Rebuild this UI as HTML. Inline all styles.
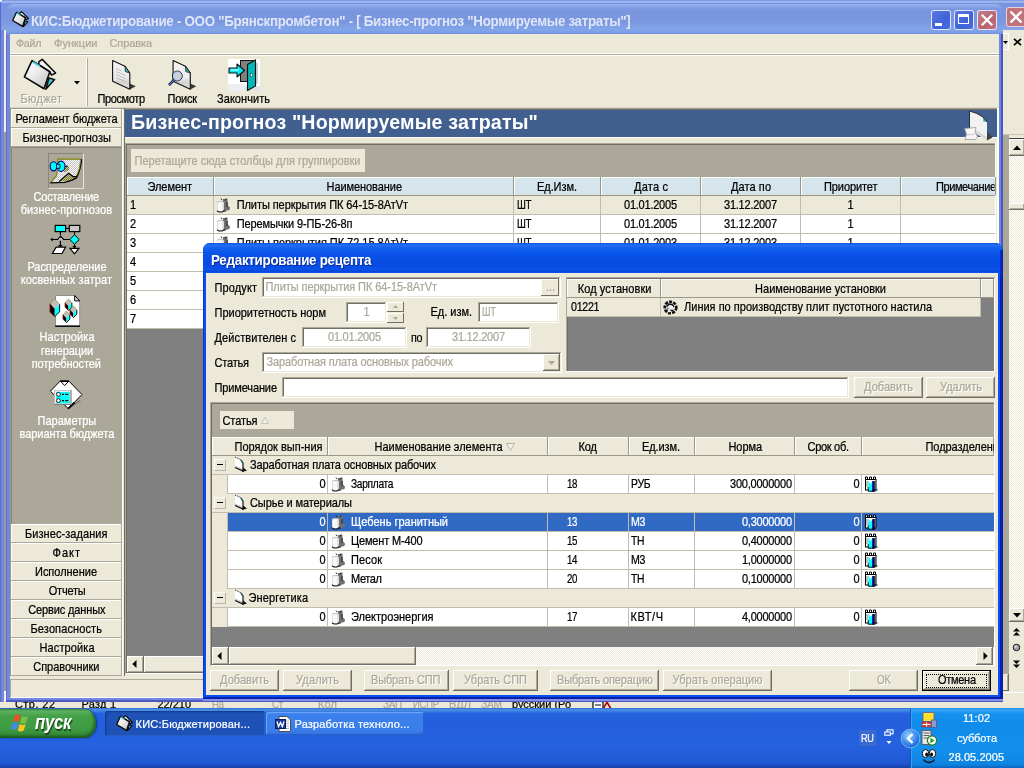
<!DOCTYPE html>
<html lang="ru"><head><meta charset="utf-8"><title>КИС:Бюджетирование</title>
<style>
html,body{margin:0;padding:0}
body{width:1024px;height:768px;overflow:hidden;position:relative;background:#ECE9D8;font-family:"Liberation Sans",sans-serif;font-size:11px}
div,span.t,svg{position:absolute}
span.t{white-space:nowrap;-webkit-text-stroke:0.22px currentColor}
#scr{left:0;top:0;width:1024px;height:768px;overflow:hidden;will-change:transform}
.dith{background-image:repeating-conic-gradient(#fff 0% 25%, #ECE9D8 0% 50%);background-size:2px 2px}
</style></head><body><div id="scr">
<div style="left:0px;top:0px;width:1024px;height:30px;background:linear-gradient(#6b88e0 0,#9db6ec 4%,#9db6ec 8%,#7592e2 11%,#7a96df 30%,#7a96df 60%,#86a4ea 100%);"></div>
<div style="left:0px;top:30px;width:4px;height:680px;background:#7088e0;"></div>
<div style="left:0px;top:0px;width:1px;height:710px;background:#5b6ad0;"></div>
<div style="left:4px;top:30px;width:2px;height:102px;background:#f6f0d8;"></div>
<div style="left:4px;top:132px;width:2px;height:559px;background:#a09c8c;"></div>
<div style="left:4px;top:691px;width:2px;height:2px;background:#fff;"></div>
<div style="left:4px;top:693px;width:2px;height:17px;background:#f6f0d8;"></div>
<div style="left:1003px;top:30px;width:21px;height:678px;background:#ECE9D8;"></div>
<div style="left:1006px;top:7px;width:21px;height:20px;background:#c0737b;border-radius:3px;box-shadow:inset 0 0 0 1px #e8d0d8"></div>
<svg style="left:1009px;top:10px" width="14" height="14" viewBox="0 0 14 14"><path d="M1.5 1.5L12.5 12.5M12.5 1.5L1.5 12.5" stroke="#fff" stroke-width="2.4" fill="none"/></svg>
<div style="left:1003px;top:33px;width:6px;height:17px;border:1px solid #fff;border-left:none;box-sizing:border-box"></div>
<svg style="left:1003px;top:41px" width="5" height="3" viewBox="0 0 5 3"><path d="M0 0L5 0L2.5 3Z" fill="#000"/></svg>
<svg style="left:1013px;top:38px" width="9" height="8" viewBox="0 0 9 8"><path d="M1 0.8L8 7.2M8 0.8L1 7.2" stroke="#000" stroke-width="1.7" fill="none"/></svg>
<div style="left:1003px;top:134px;width:21px;height:1px;background:#c8c5b6;"></div>
<div style="left:1003px;top:135px;width:6px;height:539px;background:#ACA899;"></div>
<div class="dith" style="left:1009px;top:139px;width:15px;height:482px"></div>
<div style="left:1009px;top:138px;width:15px;height:1px;background:#404040;"></div>
<div style="left:1009px;top:139px;width:16px;height:17px;background:#ECE9D8;"></div>
<div style="left:1009px;top:139px;width:15px;height:1px;background:#fff;"></div>
<div style="left:1009px;top:139px;width:1px;height:16px;background:#fff;"></div>
<div style="left:1009px;top:155px;width:16px;height:1px;background:#716F64;"></div>
<div style="left:1024px;top:139px;width:1px;height:17px;background:#716F64;"></div>
<div style="left:1010px;top:154px;width:14px;height:1px;background:#ACA899;"></div>
<div style="left:1023px;top:140px;width:1px;height:15px;background:#ACA899;"></div>
<svg style="left:1013px;top:145px" width="8" height="5" viewBox="0 0 8 5"><path d="M0 5L4 0.5L8 5Z" fill="#000"/></svg>
<div style="left:1009px;top:203px;width:16px;height:7px;background:#ECE9D8;"></div>
<div style="left:1009px;top:203px;width:15px;height:1px;background:#fff;"></div>
<div style="left:1009px;top:203px;width:1px;height:6px;background:#fff;"></div>
<div style="left:1009px;top:209px;width:16px;height:1px;background:#716F64;"></div>
<div style="left:1024px;top:203px;width:1px;height:7px;background:#716F64;"></div>
<div style="left:1010px;top:208px;width:14px;height:1px;background:#ACA899;"></div>
<div style="left:1023px;top:204px;width:1px;height:5px;background:#ACA899;"></div>
<div style="left:1009px;top:608px;width:16px;height:14px;background:#ECE9D8;"></div>
<div style="left:1009px;top:608px;width:15px;height:1px;background:#fff;"></div>
<div style="left:1009px;top:608px;width:1px;height:13px;background:#fff;"></div>
<div style="left:1009px;top:621px;width:16px;height:1px;background:#716F64;"></div>
<div style="left:1024px;top:608px;width:1px;height:14px;background:#716F64;"></div>
<div style="left:1010px;top:620px;width:14px;height:1px;background:#ACA899;"></div>
<div style="left:1023px;top:609px;width:1px;height:12px;background:#ACA899;"></div>
<svg style="left:1013px;top:613px" width="8" height="5" viewBox="0 0 8 5"><path d="M0 0L8 0L4 4.5Z" fill="#000"/></svg>
<svg style="left:1013px;top:628px" width="7" height="8" viewBox="0 0 7 8"><path d="M0 3.5L3.5 0L7 3.5Z M0 7.5L3.5 4L7 7.5Z" fill="#000"/></svg>
<svg style="left:1012px;top:643px" width="9" height="9" viewBox="0 0 9 9"><circle cx="4.5" cy="4.5" r="3.3" fill="#a0a0a0" stroke="#202020" stroke-width="1"/><circle cx="3.6" cy="3.6" r="1.2" fill="#e0e0e0"/></svg>
<svg style="left:1013px;top:660px" width="7" height="8" viewBox="0 0 7 8"><path d="M0 0.5L3.5 4L7 0.5Z M0 4.5L3.5 8L7 4.5Z" fill="#000"/></svg>
<div style="left:1003px;top:674px;width:6px;height:17px;background:#ECE9D8;"></div>
<div style="left:1008px;top:674px;width:1px;height:17px;background:#716F64;"></div>
<div style="left:1007px;top:675px;width:1px;height:15px;background:#ACA899;"></div>
<div style="left:1003px;top:690px;width:6px;height:1px;background:#716F64;"></div>
<div style="left:1003px;top:692px;width:21px;height:1px;background:#fff;"></div>
<div style="left:0px;top:702px;width:1024px;height:6px;background:#ECE9D8;"></div>
<span class="t" style="left:15.00px;top:699.29px;font-size:11px;line-height:11px;color:#000;letter-spacing:0.426px;">Стр. 22</span>
<span class="t" style="left:81.50px;top:699.29px;font-size:11px;line-height:11px;color:#000;letter-spacing:0.228px;">Разд 1</span>
<span class="t" style="left:157.50px;top:699.29px;font-size:11px;line-height:11px;color:#000;letter-spacing:-0.028px;">22/210</span>
<span class="t" style="left:212.00px;top:699.29px;font-size:11px;line-height:11px;color:#ACA899;letter-spacing:-0.300px;transform:scale(0.872,1);transform-origin:0 9.31px;">На</span>
<span class="t" style="left:272.00px;top:699.29px;font-size:11px;line-height:11px;color:#ACA899;letter-spacing:-0.300px;transform:scale(0.867,1);transform-origin:0 9.31px;">Ст</span>
<span class="t" style="left:318.00px;top:699.29px;font-size:11px;line-height:11px;color:#ACA899;letter-spacing:0.150px;">Кол</span>
<span class="t" style="left:383.00px;top:699.29px;font-size:11px;line-height:11px;color:#ACA899;letter-spacing:-0.300px;transform:scale(0.898,1);transform-origin:0 9.31px;">ЗАП</span>
<span class="t" style="left:413.00px;top:699.29px;font-size:11px;line-height:11px;color:#ACA899;letter-spacing:-0.300px;transform:scale(0.861,1);transform-origin:0 9.31px;">ИСПР</span>
<span class="t" style="left:449.00px;top:699.29px;font-size:11px;line-height:11px;color:#ACA899;letter-spacing:0.119px;">ВДЛ</span>
<span class="t" style="left:481.00px;top:699.29px;font-size:11px;line-height:11px;color:#ACA899;letter-spacing:-0.300px;transform:scale(0.931,1);transform-origin:0 9.31px;">ЗАМ</span>
<span class="t" style="left:512.00px;top:699.29px;font-size:11px;line-height:11px;color:#000;letter-spacing:-0.016px;">русский (Ро</span>
<svg style="left:592px;top:700px" width="20" height="10" viewBox="0 0 20 10"><rect x="1" y="1.5" width="10" height="8" fill="#fff" stroke="#000" stroke-width="1.2"/><path d="M3 5L9 5" stroke="#000" stroke-width="1"/><path d="M11 9L15 2L19 9" stroke="#b00000" stroke-width="1.6" fill="none"/></svg>
<div style="left:6px;top:4px;width:997px;height:698px;background:#7088e0;border-radius:7px 7px 0 0"></div>
<div style="left:6px;top:30px;width:1px;height:672px;background:#6470d8;"></div>
<div style="left:1001px;top:30px;width:2px;height:672px;background:#4e56c4;"></div>
<div style="left:6px;top:700px;width:997px;height:2px;background:#4e56c4;"></div>
<div style="left:6px;top:4px;width:997px;height:30px;background:linear-gradient(#9ab4ec 0,#92acea 5%,#7e9ae1 15%,#7a96df 22%,#7a96df 58%,#82a6ea 86%,#7e9fe7 93%,#6f8fe0 100%);border-radius:7px 7px 0 0"></div>
<div style="left:10px;top:34px;width:989px;height:664px;background:#ECE9D8;"></div>
<svg style="left:11.5px;top:11px" width="17" height="16.5" viewBox="0 0 34 33"><path d="M16 7L15.8 3.8L19.2 1.4L32.6 15L28.5 17.2L26.8 13.7Z" fill="#f0f0f0" stroke="#0a0a0a" stroke-width="2.4" stroke-linejoin="round"/>
<path d="M26 20L31.6 21.6L22.8 31.2Z" fill="#40d0d8" stroke="#0a0a0a" stroke-width="2.2" stroke-linejoin="round"/>
<path d="M9 2.6L26.8 13.7L21 30.8L1.4 18.9Z" fill="url(#fg)" stroke="#0a0a0a" stroke-width="2.6" stroke-linejoin="round"/>
<path d="M9.6 4.4L16.6 8.6" stroke="#40d0d8" stroke-width="3"/></svg>
<span class="t" style="left:31.00px;top:14.15px;font-size:14px;line-height:14px;color:#dfe6f8;letter-spacing:-0.300px;font-weight:bold;-webkit-text-stroke:0;transform:scale(0.952,1);transform-origin:0 11.85px;">КИС:Бюджетирование - ООО "Брянскпромбетон" - [ Бизнес-прогноз "Нормируемые затраты"]</span>
<div style="left:931px;top:10px;width:20px;height:20px;background:linear-gradient(135deg,#5a7ae4,#3f62d8 60%,#4a70e2);border-radius:3px;box-shadow:inset 0 0 0 1px #dfe6fb"></div>
<div style="left:935px;top:23px;width:7px;height:3px;background:#fff;"></div>
<div style="left:954px;top:10px;width:20px;height:20px;background:linear-gradient(135deg,#5a7ae4,#3f62d8 60%,#4a70e2);border-radius:3px;box-shadow:inset 0 0 0 1px #dfe6fb"></div>
<div style="left:958px;top:14px;width:11px;height:10px;border:1.5px solid #fff;border-top-width:3px;box-sizing:border-box"></div>
<div style="left:977px;top:10px;width:20px;height:20px;background:linear-gradient(135deg,#c8808c,#b9646f 60%,#c27480);border-radius:3px;box-shadow:inset 0 0 0 1px #dfe6fb"></div>
<svg style="left:980px;top:13px" width="14" height="14" viewBox="0 0 14 14"><path d="M1.8 1.8L12.2 12.2M12.2 1.8L1.8 12.2" stroke="#fff" stroke-width="2.3" fill="none"/></svg>
<span class="t" style="left:15.50px;top:38.19px;font-size:11px;line-height:11px;color:#ACA899;letter-spacing:-0.300px;transform:scale(0.975,1);transform-origin:0 9.31px;">Файл</span>
<span class="t" style="left:54.00px;top:38.19px;font-size:11px;line-height:11px;color:#ACA899;letter-spacing:0.027px;">Функции</span>
<span class="t" style="left:109.50px;top:38.19px;font-size:11px;line-height:11px;color:#ACA899;letter-spacing:-0.108px;">Справка</span>
<div style="left:10px;top:53px;width:989px;height:1px;background:#fff;"></div>
<div style="left:10px;top:54px;width:989px;height:1px;background:#ACA899;"></div>
<div style="left:10px;top:55px;width:989px;height:1px;background:#fff;"></div>
<div style="left:10px;top:107px;width:989px;height:1px;background:#d8d5c5;"></div>
<div style="left:10px;top:108px;width:989px;height:1px;background:#9d9a8b;"></div>
<div style="left:86px;top:58px;width:1px;height:48px;background:#fff;"></div>
<div style="left:87px;top:58px;width:1px;height:48px;background:#ACA899;"></div>
<span class="t" style="left:21.50px;top:94.69px;font-size:11px;line-height:11px;color:#fff;letter-spacing:0.342px;transform:scale(1.000,1.125);transform-origin:0 9.31px;">Бюджет</span>
<span class="t" style="left:20.50px;top:93.69px;font-size:11px;line-height:11px;color:#ACA899;letter-spacing:0.342px;transform:scale(1.000,1.125);transform-origin:0 9.31px;">Бюджет</span>
<span class="t" style="left:97.50px;top:93.69px;font-size:11px;line-height:11px;color:#000;letter-spacing:-0.390px;transform:scale(1.000,1.125);transform-origin:0 9.31px;">Просмотр</span>
<span class="t" style="left:167.50px;top:93.69px;font-size:11px;line-height:11px;color:#000;letter-spacing:-0.245px;transform:scale(1.000,1.125);transform-origin:0 9.31px;">Поиск</span>
<span class="t" style="left:217.00px;top:93.69px;font-size:11px;line-height:11px;color:#000;letter-spacing:0.059px;transform:scale(1.000,1.125);transform-origin:0 9.31px;">Закончить</span>
<svg style="left:74px;top:81px" width="6" height="4" viewBox="0 0 6 4"><path d="M0 0L6 0L3 3.5Z" fill="#000"/></svg>
<svg style="left:23px;top:58px" width="34" height="33" viewBox="0 0 34 33"><defs><linearGradient id="fg" x1="0" y1="0" x2="1" y2="1"><stop offset="0" stop-color="#ffffff"/><stop offset="0.45" stop-color="#ececec"/><stop offset="1" stop-color="#bcbcbc"/></linearGradient></defs>
<path d="M16 7L15.8 3.8L19.2 1.4L32.6 15L28.5 17.2L26.8 13.7Z" fill="#f0f0f0" stroke="#0a0a0a" stroke-width="1.5" stroke-linejoin="round"/>
<path d="M26 20L31.6 21.6L22.8 31.2Z" fill="#40d0d8" stroke="#0a0a0a" stroke-width="1.5" stroke-linejoin="round"/>
<path d="M9 2.6L26.8 13.7L21 30.8L1.4 18.9Z" fill="url(#fg)" stroke="#0a0a0a" stroke-width="1.6" stroke-linejoin="round"/>
<path d="M9.6 4L16.6 8" stroke="#40d0d8" stroke-width="2"/></svg>
<svg style="left:112px;top:60px" width="25" height="31" viewBox="0 0 25 31"><defs><linearGradient id="pg" x1="0" y1="0" x2="0" y2="1"><stop offset="0" stop-color="#f4f4f4"/><stop offset="0.6" stop-color="#ececec"/><stop offset="0.75" stop-color="#d4d4d4"/><stop offset="1" stop-color="#dcdcdc"/></linearGradient></defs>
<path d="M17.8 23.6L23.8 26.3L17.8 29.4Z" fill="#383838"/>
<path d="M0.6 0.6L13 6.2L17.8 13L17.8 29.2L0.6 21.3Z" fill="url(#pg)" stroke="#111" stroke-width="1.1" stroke-linejoin="round"/>
<path d="M13 6.2L13.3 11.6L17.8 13Z" fill="#3cb0b0" stroke="#111" stroke-width="0.7"/>
<path d="M4 8.5L10 11M4 11.5L13.5 15.6M4 14.5L13.5 18.6M4 17.5L13.5 21.6" stroke="#b8b8b8" stroke-width="0.9"/></svg>
<svg style="left:168px;top:60px" width="30" height="31" viewBox="0 0 30 31"><path d="M22.3 23.6L28.3 26.3L22.3 29.4Z" fill="#383838"/>
<path d="M5.1 0.6L17.5 6.2L22.3 13L22.3 29.2L5.1 21.3Z" fill="url(#pg)" stroke="#111" stroke-width="1.1" stroke-linejoin="round"/>
<path d="M17.5 6.2L17.8 11.6L22.3 13Z" fill="#3cb0b0" stroke="#111" stroke-width="0.7"/>
<path d="M6 19.8L1 25.2" stroke="#111" stroke-width="2.6"/><path d="M6 19.8L1.2 25" stroke="#4070e8" stroke-width="1.2"/>
<circle cx="9.3" cy="16" r="4.9" fill="#d0d0d0" stroke="#111" stroke-width="1"/><circle cx="9.3" cy="16" r="3.9" fill="none" stroke="#a8c8ff" stroke-width="1.1"/></svg>
<svg style="left:228px;top:59px" width="32" height="32" viewBox="0 0 32 32"><rect width="32" height="32" fill="#fff"/>
<path d="M0 27L32 27L32 32L0 32Z" fill="#e4e4e4"/><path d="M0 25L18 25L16 32L0 32Z" fill="#ededed"/>
<rect x="12.5" y="1.5" width="15" height="21" fill="#808080" stroke="#111" stroke-width="1"/>
<path d="M28 4L30 4L30 24L27 26Z" fill="#d0d0d0"/>
<path d="M19.5 5.5L27.5 1L27.5 27L19.5 31.5Z" fill="#00b8b8" stroke="#111" stroke-width="1.1"/>
<rect x="22.6" y="14.5" width="1.8" height="3" fill="#fff" stroke="#333" stroke-width="0.5"/>
<path d="M1 9L9 9L9 5L16.5 11.5L9 18L9 14L1 14Z" fill="#00e8f0" stroke="#111" stroke-width="1.1" stroke-linejoin="round"/>
<path d="M3 11L11 11" stroke="#fff" stroke-width="1"/></svg>
<div style="left:10px;top:108px;width:1px;height:568px;background:#9d9a8b;"></div>
<div style="left:11px;top:109px;width:111px;height:567px;background:#ACA899;"></div>
<div style="left:0px;top:0px;width:2px;height:1px;background:#fff;"></div>
<div style="left:0px;top:1px;width:1px;height:1px;background:#fff;"></div>
<div style="left:11px;top:109px;width:111px;height:19px;background:#ECE9D8;"></div>
<div style="left:11px;top:109px;width:110px;height:1px;background:#fff;"></div>
<div style="left:11px;top:109px;width:1px;height:18px;background:#fff;"></div>
<div style="left:11px;top:127px;width:111px;height:1px;background:#ACA899;"></div>
<div style="left:121px;top:109px;width:1px;height:19px;background:#ACA899;"></div>
<span class="t" style="left:15.50px;top:113.69px;font-size:11px;line-height:11px;color:#000;letter-spacing:0.001px;transform:scale(1.000,1.125);transform-origin:0 9.31px;">Регламент бюджета</span>
<div style="left:11px;top:128px;width:111px;height:19px;background:#ECE9D8;"></div>
<div style="left:11px;top:128px;width:110px;height:1px;background:#fff;"></div>
<div style="left:11px;top:128px;width:1px;height:18px;background:#fff;"></div>
<div style="left:11px;top:146px;width:111px;height:1px;background:#ACA899;"></div>
<div style="left:121px;top:128px;width:1px;height:19px;background:#ACA899;"></div>
<span class="t" style="left:22.50px;top:132.69px;font-size:11px;line-height:11px;color:#000;letter-spacing:0.109px;transform:scale(1.000,1.125);transform-origin:0 9.31px;">Бизнес-прогнозы</span>
<div style="left:11px;top:147px;width:1px;height:377px;background:#8a877a;"></div>
<div style="left:11px;top:147px;width:111px;height:1px;background:#8a877a;"></div>
<div style="left:11px;top:524px;width:111px;height:19px;background:#ECE9D8;"></div>
<div style="left:11px;top:524px;width:110px;height:1px;background:#fff;"></div>
<div style="left:11px;top:524px;width:1px;height:18px;background:#fff;"></div>
<div style="left:11px;top:542px;width:111px;height:1px;background:#ACA899;"></div>
<div style="left:121px;top:524px;width:1px;height:19px;background:#ACA899;"></div>
<span class="t" style="left:25.00px;top:528.69px;font-size:11px;line-height:11px;color:#000;letter-spacing:0.067px;transform:scale(1.000,1.125);transform-origin:0 9.31px;">Бизнес-задания</span>
<div style="left:11px;top:543px;width:111px;height:19px;background:#ECE9D8;"></div>
<div style="left:11px;top:543px;width:110px;height:1px;background:#fff;"></div>
<div style="left:11px;top:543px;width:1px;height:18px;background:#fff;"></div>
<div style="left:11px;top:561px;width:111px;height:1px;background:#ACA899;"></div>
<div style="left:121px;top:543px;width:1px;height:19px;background:#ACA899;"></div>
<span class="t" style="left:52.50px;top:547.69px;font-size:11px;line-height:11px;color:#000;letter-spacing:1.015px;transform:scale(1.000,1.125);transform-origin:0 9.31px;">Факт</span>
<div style="left:11px;top:562px;width:111px;height:19px;background:#ECE9D8;"></div>
<div style="left:11px;top:562px;width:110px;height:1px;background:#fff;"></div>
<div style="left:11px;top:562px;width:1px;height:18px;background:#fff;"></div>
<div style="left:11px;top:580px;width:111px;height:1px;background:#ACA899;"></div>
<div style="left:121px;top:562px;width:1px;height:19px;background:#ACA899;"></div>
<span class="t" style="left:35.00px;top:566.69px;font-size:11px;line-height:11px;color:#000;letter-spacing:-0.020px;transform:scale(1.000,1.125);transform-origin:0 9.31px;">Исполнение</span>
<div style="left:11px;top:581px;width:111px;height:19px;background:#ECE9D8;"></div>
<div style="left:11px;top:581px;width:110px;height:1px;background:#fff;"></div>
<div style="left:11px;top:581px;width:1px;height:18px;background:#fff;"></div>
<div style="left:11px;top:599px;width:111px;height:1px;background:#ACA899;"></div>
<div style="left:121px;top:581px;width:1px;height:19px;background:#ACA899;"></div>
<span class="t" style="left:48.75px;top:585.69px;font-size:11px;line-height:11px;color:#000;letter-spacing:-0.204px;transform:scale(1.000,1.125);transform-origin:0 9.31px;">Отчеты</span>
<div style="left:11px;top:600px;width:111px;height:19px;background:#ECE9D8;"></div>
<div style="left:11px;top:600px;width:110px;height:1px;background:#fff;"></div>
<div style="left:11px;top:600px;width:1px;height:18px;background:#fff;"></div>
<div style="left:11px;top:618px;width:111px;height:1px;background:#ACA899;"></div>
<div style="left:121px;top:600px;width:1px;height:19px;background:#ACA899;"></div>
<span class="t" style="left:28.25px;top:604.69px;font-size:11px;line-height:11px;color:#000;letter-spacing:-0.130px;transform:scale(1.000,1.125);transform-origin:0 9.31px;">Сервис данных</span>
<div style="left:11px;top:619px;width:111px;height:19px;background:#ECE9D8;"></div>
<div style="left:11px;top:619px;width:110px;height:1px;background:#fff;"></div>
<div style="left:11px;top:619px;width:1px;height:18px;background:#fff;"></div>
<div style="left:11px;top:637px;width:111px;height:1px;background:#ACA899;"></div>
<div style="left:121px;top:619px;width:1px;height:19px;background:#ACA899;"></div>
<span class="t" style="left:30.50px;top:623.69px;font-size:11px;line-height:11px;color:#000;letter-spacing:0.122px;transform:scale(1.000,1.125);transform-origin:0 9.31px;">Безопасность</span>
<div style="left:11px;top:638px;width:111px;height:19px;background:#ECE9D8;"></div>
<div style="left:11px;top:638px;width:110px;height:1px;background:#fff;"></div>
<div style="left:11px;top:638px;width:1px;height:18px;background:#fff;"></div>
<div style="left:11px;top:656px;width:111px;height:1px;background:#ACA899;"></div>
<div style="left:121px;top:638px;width:1px;height:19px;background:#ACA899;"></div>
<span class="t" style="left:39.50px;top:642.69px;font-size:11px;line-height:11px;color:#000;letter-spacing:0.106px;transform:scale(1.000,1.125);transform-origin:0 9.31px;">Настройка</span>
<div style="left:11px;top:657px;width:111px;height:19px;background:#ECE9D8;"></div>
<div style="left:11px;top:657px;width:110px;height:1px;background:#fff;"></div>
<div style="left:11px;top:657px;width:1px;height:18px;background:#fff;"></div>
<div style="left:11px;top:675px;width:111px;height:1px;background:#ACA899;"></div>
<div style="left:121px;top:657px;width:1px;height:19px;background:#ACA899;"></div>
<span class="t" style="left:33.25px;top:661.69px;font-size:11px;line-height:11px;color:#000;letter-spacing:-0.039px;transform:scale(1.000,1.125);transform-origin:0 9.31px;">Справочники</span>
<span class="t" style="left:33.40px;top:192.39px;font-size:11px;line-height:11px;color:#fff;letter-spacing:-0.145px;transform:scale(1.000,1.125);transform-origin:0 9.31px;">Составление</span>
<span class="t" style="left:20.70px;top:205.19px;font-size:11px;line-height:11px;color:#fff;letter-spacing:0.087px;transform:scale(1.000,1.125);transform-origin:0 9.31px;">бизнес-прогнозов</span>
<span class="t" style="left:27.40px;top:262.19px;font-size:11px;line-height:11px;color:#fff;letter-spacing:-0.040px;transform:scale(1.000,1.125);transform-origin:0 9.31px;">Распределение</span>
<span class="t" style="left:20.70px;top:275.09px;font-size:11px;line-height:11px;color:#fff;letter-spacing:0.088px;transform:scale(1.000,1.125);transform-origin:0 9.31px;">косвенных затрат</span>
<span class="t" style="left:39.50px;top:332.44px;font-size:11px;line-height:11px;color:#fff;letter-spacing:0.106px;transform:scale(1.000,1.125);transform-origin:0 9.31px;">Настройка</span>
<span class="t" style="left:40.75px;top:345.69px;font-size:11px;line-height:11px;color:#fff;letter-spacing:-0.050px;transform:scale(1.000,1.125);transform-origin:0 9.31px;">генерации</span>
<span class="t" style="left:31.75px;top:358.69px;font-size:11px;line-height:11px;color:#fff;letter-spacing:-0.082px;transform:scale(1.000,1.125);transform-origin:0 9.31px;">потребностей</span>
<span class="t" style="left:37.50px;top:415.69px;font-size:11px;line-height:11px;color:#fff;letter-spacing:0.015px;transform:scale(1.000,1.125);transform-origin:0 9.31px;">Параметры</span>
<span class="t" style="left:19.50px;top:428.69px;font-size:11px;line-height:11px;color:#fff;letter-spacing:-0.033px;transform:scale(1.000,1.125);transform-origin:0 9.31px;">варианта бюджета</span>
<div style="left:48px;top:153px;width:36px;height:36px;box-sizing:border-box;border:1px solid;border-color:#8a877a #e8e6dc #e8e6dc #8a877a"></div>
<svg style="left:49px;top:154px" width="34" height="34" viewBox="0 0 34 34"><defs><pattern id="dt" width="2" height="2" patternUnits="userSpaceOnUse"><rect width="2" height="2" fill="#fff"/><rect width="1" height="1" fill="#c0c0c0"/><rect x="1" y="1" width="1" height="1" fill="#c0c0c0"/></pattern>
<pattern id="dt2" width="2" height="2" patternUnits="userSpaceOnUse"><rect width="2" height="2" fill="#c0c0c0"/><rect width="1" height="1" fill="#808000"/><rect x="1" y="1" width="1" height="1" fill="#808000"/></pattern></defs>
<path d="M9 5.2L32.5 5.2C32 12 30.5 18 27.4 23.8C24 26 20 27.6 15.6 28.4L1.3 28.9L7.6 21.5L8.2 16.9Z" fill="url(#dt)"/>
<path d="M11 27.4L19.6 19.6L24.2 23L27.8 23C25 26 20 27.6 11 27.4Z" fill="url(#dt2)"/>
<path d="M15.6 12.9L20 12.9L20 16L15 18.8Z" fill="url(#dt2)"/>
<path d="M1.3 28.9L7.6 21.5L8.4 16.5M9 9L9 5.2L32.5 5.2" fill="none" stroke="#808000" stroke-width="1.2"/>
<path d="M32.5 5.2C32 12 30.5 18 27.4 23.8C24 26 20 27.6 15.6 28.4L1.3 28.9" fill="none" stroke="#000" stroke-width="1.4"/>
<path d="M31.3 8C30.8 14 29.5 18.5 27 22.5" fill="none" stroke="#808000" stroke-width="1"/>
<path d="M10 27.6L19.6 19.2L24.2 22.6L27.6 22.6" fill="none" stroke="#000" stroke-width="1.2"/>
<ellipse cx="4.5" cy="12.3" rx="3.4" ry="4.6" fill="#00ffff" stroke="#000080" stroke-width="1.1"/>
<ellipse cx="12" cy="12.3" rx="4" ry="5.2" fill="#00ffff" stroke="#000080" stroke-width="1.1"/>
<path d="M8 10.3L11 10.3L11 14.3L8 14.3" fill="#00ffff" stroke="#000" stroke-width="0.9"/>
<path d="M16 12.3L19 12.3" stroke="#000" stroke-width="1.1"/></svg>
<svg style="left:50px;top:224px" width="31" height="31" viewBox="0 0 31 31"><path d="M15.6 4.4L19.3 4.4M10.4 7.7L10.4 11M2 15.5L7.8 15.5L10.6 12.2L13.6 15.5L19.8 15.5M10.4 16.4L10.4 23M8.6 21.6L12.2 21.6M24.5 7.7L24.5 10.8M24.5 20.2L24.5 24.2M22.8 22.7L26.2 22.7" stroke="#000" stroke-width="1.2" fill="none"/>
<circle cx="10.5" cy="15" r="1.6" fill="#c0c0c0"/>
<rect x="5.2" y="1.4" width="10.4" height="6.2" fill="#00ffff" stroke="#000" stroke-width="1.2"/>
<rect x="19.3" y="1.4" width="10.5" height="6.2" fill="#c8c8c8" stroke="#000" stroke-width="1.2"/>
<path d="M24.5 10.8L29.3 15.5L24.5 20.2L19.8 15.5Z" fill="#00ffff" stroke="#000" stroke-width="1"/>
<path d="M0.3 15.5L2.6 13.6L2.6 17.4Z" fill="#000"/>
<path d="M6.2 23.2L15.6 23.2L12 29.5L2.4 29.5Z" fill="#fff" stroke="#000" stroke-width="1.2"/>
<path d="M20 24.4L28.9 24.4L24.5 29.8Z" fill="#fff" stroke="#000" stroke-width="1.2"/></svg>
<svg style="left:49px;top:294px" width="33" height="34" viewBox="0 0 33 34"><path d="M6.5 1.5L25.7 1.5L30.7 6.9L30.7 32L6.5 32Z" fill="#fff" stroke="#909090" stroke-width="1"/><path d="M25.7 1.5L25.7 6.9L30.7 6.9Z" fill="#e0e0e0" stroke="#000" stroke-width="1"/><path d="M6.2 32.2L31 32.2" stroke="#000" stroke-width="1.4"/>
<path d="M5.7 5.1 L10.6 10.3 L5.7 15 L1 9.8 Z" fill="#c0c0c0"/><path d="M1 9.8 L5.7 15 L5.7 22.6 L1 18.1 Z" fill="#000"/><path d="M5.7 15 L10.6 10.3 L10.6 17.9 L5.7 22.6 Z" fill="#00ffff"/><path d="M1 9.8 L5.7 5.1 L10.6 10.3" fill="none" stroke="#808000" stroke-width="0.9" stroke-dasharray="1 0.6"/><path d="M1 9.8 L1 18.1 L5.7 22.6" fill="none" stroke="#900000" stroke-width="0.8"/><path d="M10.6 10.3 L10.6 17.9 L5.7 22.6" fill="none" stroke="#000" stroke-width="0.9"/><path d="M19.5 5.1 L22.9 8.8 L19.5 12.1 L16.1 8.8 Z" fill="#c0c0c0"/><path d="M16.1 8.8 L19.5 12.1 L19.5 16.6 L16.1 13.2 Z" fill="#000"/><path d="M19.5 12.1 L22.9 8.8 L22.9 13.2 L19.5 16.6 Z" fill="#00ffff"/><path d="M16.1 8.8 L19.5 5.1 L22.9 8.8" fill="none" stroke="#808000" stroke-width="0.9" stroke-dasharray="1 0.6"/><path d="M16.1 8.8 L16.1 13.2 L19.5 16.6" fill="none" stroke="#900000" stroke-width="0.8"/><path d="M22.9 8.8 L22.9 13.2 L19.5 16.6" fill="none" stroke="#000" stroke-width="0.9"/><path d="M24.4 12.1 L27.8 15.8 L24.4 19.2 L21 15.8 Z" fill="#c0c0c0"/><path d="M21 15.8 L24.4 19.2 L24.4 23.6 L21 20.2 Z" fill="#000"/><path d="M24.4 19.2 L27.8 15.8 L27.8 20.2 L24.4 23.6 Z" fill="#00ffff"/><path d="M21 15.8 L24.4 12.1 L27.8 15.8" fill="none" stroke="#808000" stroke-width="0.9" stroke-dasharray="1 0.6"/><path d="M21 15.8 L21 20.2 L24.4 23.6" fill="none" stroke="#900000" stroke-width="0.8"/><path d="M27.8 15.8 L27.8 20.2 L24.4 23.6" fill="none" stroke="#000" stroke-width="0.9"/><path d="M17.4 17.1 L20.8 20.7 L17.4 24.1 L14 20.7 Z" fill="#c0c0c0"/><path d="M14 20.7 L17.4 24.1 L17.4 28.6 L14 25.2 Z" fill="#000"/><path d="M17.4 24.1 L20.8 20.7 L20.8 25.2 L17.4 28.6 Z" fill="#00ffff"/><path d="M14 20.7 L17.4 17.1 L20.8 20.7" fill="none" stroke="#808000" stroke-width="0.9" stroke-dasharray="1 0.6"/><path d="M14 20.7 L14 25.2 L17.4 28.6" fill="none" stroke="#900000" stroke-width="0.8"/><path d="M20.8 20.7 L20.8 25.2 L17.4 28.6" fill="none" stroke="#000" stroke-width="0.9"/></svg>
<svg style="left:50px;top:380px" width="34" height="31" viewBox="0 0 34 31"><path d="M20 28.2L31 21.2L29.5 20L19 27Z" fill="#808080"/>
<path d="M0.4 11.2L10.1 1.2L19 1.2L32 14.6L18.2 28.6Z" fill="#fff" stroke="#000" stroke-width="1"/>
<path d="M10.1 1.2L19 1.2" stroke="#000" stroke-width="1.6"/><path d="M11.2 1.8L14.6 5.5L18.2 1.8" fill="none" stroke="#000" stroke-width="1"/>
<path d="M24.5 22.5L18.2 28.6" stroke="#000" stroke-width="1.8"/>
<rect x="4.2" y="10.1" width="17.4" height="14.9" fill="#808080"/><rect x="4.2" y="10.1" width="16.4" height="13.9" fill="#c8c8c8"/>
<rect x="6" y="11.7" width="13.5" height="11.5" fill="#00ffff"/><path d="M5.6 23.4L5.6 11.3L19.8 11.3" fill="none" stroke="#fff" stroke-width="0.8"/>
<circle cx="8.4" cy="14.3" r="1.9" fill="#fff" stroke="#400000" stroke-width="0.9"/><circle cx="8.4" cy="20.6" r="1.9" fill="#fff" stroke="#400000" stroke-width="0.9"/>
<path d="M12 14.3L14 14.3M15.2 14.3L18.2 14.3M12 20.6L14 20.6M15.2 20.6L18.2 20.6" stroke="#000" stroke-width="1.3"/></svg>
<div style="left:122px;top:109px;width:4px;height:567px;background:#ECE9D8;"></div>
<div style="left:122px;top:109px;width:1px;height:567px;background:#fff;"></div>
<div style="left:124px;top:109px;width:1px;height:567px;background:#ACA899;"></div>
<div style="left:125px;top:108px;width:872px;height:1px;background:#a29f90;"></div>
<div style="left:125px;top:109px;width:872px;height:1px;background:#716f64;"></div>
<div style="left:124px;top:108px;width:1px;height:568px;background:#716f64;"></div>
<div style="left:997px;top:108px;width:2px;height:590px;background:#fff;"></div>
<div style="left:125px;top:110px;width:872px;height:27px;background:#41608F;"></div>
<div style="left:125px;top:137px;width:872px;height:1px;background:#fff;"></div>
<span class="t" style="left:131.00px;top:113.21px;font-size:19.6px;line-height:19.6px;color:#fff;letter-spacing:0.165px;font-weight:bold;-webkit-text-stroke:0;">Бизнес-прогноз "Нормируемые затраты"</span>
<svg style="left:964px;top:110px" width="29" height="32" viewBox="0 0 29 32"><path d="M23 21.5L28.5 27.5L23 30.5Z" fill="#404040"/>
<path d="M5.5 1L13 3.5L19 7L23 12L23 30.5L5.5 19.5Z" fill="#f2f2f2"/><path d="M5.5 19.5L23 30.5L23 27L5.5 16Z" fill="#d8d8d8"/>
<path d="M19 7L19.3 11.6L23 12Z" fill="#40b8b8"/><path d="M5.5 19.5L5.5 1L13 3.5L19 7L23 12" fill="none" stroke="#202020" stroke-width="0.9"/>
<path d="M0.5 18.5L12 17.5L11 22L13.5 26.5L11.5 29.5L1 29.5L2.5 24Z" fill="#f6f6f6" stroke="#9a9a9a" stroke-width="0.8"/><path d="M3 25L11 24" stroke="#c8c8c8" stroke-width="1"/></svg>
<div style="left:126px;top:143px;width:870px;height:531px;background:#ACA899;"></div>
<div style="left:125px;top:143px;width:871px;height:1px;background:#ACA899;"></div>
<div style="left:125px;top:143px;width:1px;height:531px;background:#ACA899;"></div>
<div style="left:126px;top:144px;width:869px;height:1px;background:#716F64;"></div>
<div style="left:126px;top:144px;width:1px;height:529px;background:#716F64;"></div>
<div style="left:995px;top:143px;width:1px;height:531px;background:#fff;"></div>
<div style="left:126px;top:673px;width:870px;height:1px;background:#fff;"></div>
<div style="left:131px;top:149px;width:234px;height:23px;background:#ECE9D8;"></div>
<span class="t" style="left:134.50px;top:155.69px;font-size:11px;line-height:11px;color:#aca899;letter-spacing:-0.001px;transform:scale(1.000,1.125);transform-origin:0 9.31px;">Перетащите сюда столбцы для группировки</span>
<div style="left:127px;top:177px;width:868px;height:18px;background:#d6e4ec;"></div>
<div style="left:127px;top:177px;width:1px;height:18px;background:#fff;"></div>
<div style="left:127px;top:177px;width:86px;height:1px;background:#fff;"></div>
<div style="left:213px;top:177px;width:1px;height:18px;background:#9a9788;"></div>
<div style="left:214px;top:177px;width:1px;height:18px;background:#fff;"></div>
<div style="left:214px;top:177px;width:299px;height:1px;background:#fff;"></div>
<div style="left:513px;top:177px;width:1px;height:18px;background:#9a9788;"></div>
<div style="left:514px;top:177px;width:1px;height:18px;background:#fff;"></div>
<div style="left:514px;top:177px;width:86px;height:1px;background:#fff;"></div>
<div style="left:600px;top:177px;width:1px;height:18px;background:#9a9788;"></div>
<div style="left:601px;top:177px;width:1px;height:18px;background:#fff;"></div>
<div style="left:601px;top:177px;width:99px;height:1px;background:#fff;"></div>
<div style="left:700px;top:177px;width:1px;height:18px;background:#9a9788;"></div>
<div style="left:701px;top:177px;width:1px;height:18px;background:#fff;"></div>
<div style="left:701px;top:177px;width:99px;height:1px;background:#fff;"></div>
<div style="left:800px;top:177px;width:1px;height:18px;background:#9a9788;"></div>
<div style="left:801px;top:177px;width:1px;height:18px;background:#fff;"></div>
<div style="left:801px;top:177px;width:99px;height:1px;background:#fff;"></div>
<div style="left:900px;top:177px;width:1px;height:18px;background:#9a9788;"></div>
<div style="left:901px;top:177px;width:1px;height:18px;background:#fff;"></div>
<div style="left:901px;top:177px;width:94px;height:1px;background:#fff;"></div>
<div style="left:995px;top:177px;width:1px;height:18px;background:#9a9788;"></div>
<div style="left:127px;top:195px;width:868px;height:1px;background:#9a9788;"></div>
<span class="t" style="left:147.50px;top:181.69px;font-size:11px;line-height:11px;color:#000;letter-spacing:-0.061px;transform:scale(1.000,1.125);transform-origin:0 9.31px;">Элемент</span>
<span class="t" style="left:326.50px;top:181.69px;font-size:11px;line-height:11px;color:#000;letter-spacing:-0.068px;transform:scale(1.000,1.125);transform-origin:0 9.31px;">Наименование</span>
<span class="t" style="left:537.00px;top:181.69px;font-size:11px;line-height:11px;color:#000;letter-spacing:-0.063px;transform:scale(1.000,1.125);transform-origin:0 9.31px;">Ед.Изм.</span>
<span class="t" style="left:634.00px;top:181.69px;font-size:11px;line-height:11px;color:#000;letter-spacing:0.218px;transform:scale(1.000,1.125);transform-origin:0 9.31px;">Дата с</span>
<span class="t" style="left:731.00px;top:181.69px;font-size:11px;line-height:11px;color:#000;letter-spacing:0.086px;transform:scale(1.000,1.125);transform-origin:0 9.31px;">Дата по</span>
<span class="t" style="left:824.00px;top:181.69px;font-size:11px;line-height:11px;color:#000;letter-spacing:-0.094px;transform:scale(1.000,1.125);transform-origin:0 9.31px;">Приоритет</span>
<span class="t" style="left:936.00px;top:181.69px;font-size:11px;line-height:11px;color:#000;letter-spacing:-0.407px;transform:scale(1.000,1.125);transform-origin:0 9.31px;clip-path:inset(0 1px 0 0);">Примечание</span>
<div style="left:127px;top:196px;width:868px;height:18px;background:#ECE9D8;"></div>
<div style="left:127px;top:214px;width:868px;height:1px;background:#c0bdae;"></div>
<div style="left:213px;top:196px;width:1px;height:18px;background:#c0bdae;"></div>
<div style="left:513px;top:196px;width:1px;height:18px;background:#c0bdae;"></div>
<div style="left:600px;top:196px;width:1px;height:18px;background:#c0bdae;"></div>
<div style="left:700px;top:196px;width:1px;height:18px;background:#c0bdae;"></div>
<div style="left:800px;top:196px;width:1px;height:18px;background:#c0bdae;"></div>
<div style="left:900px;top:196px;width:1px;height:18px;background:#c0bdae;"></div>
<span class="t" style="left:130.00px;top:199.69px;font-size:11px;line-height:11px;color:#000;transform:scale(1.000,1.125);transform-origin:0 9.31px;">1</span>
<svg style="left:216px;top:198px" width="15" height="15" viewBox="0 0 15 15"><path d="M7 1L11.5 0.8L11.8 7.5L14 9.5L13.5 12L9 13L6 10Z" fill="#707070"/>
<path d="M9 2.5L10.2 0.5M6 2L5 0.6M11 4L11 9" stroke="#222" stroke-width="1"/>
<path d="M1 4.5C1 3 8 3 8 4.5L8 12.5C8 14.2 1 14.2 1 12.5Z" fill="#e0e0e0"/>
<path d="M3 4.5L3 13.5M5 4.5L5 13.6" stroke="#fff" stroke-width="1.6"/>
<path d="M1 4.5C1 3 8 3 8 4.5" fill="#f4f4f4" stroke="#b0b0b0" stroke-width="0.8"/>
<path d="M1.2 12.6C1.5 14.4 7.5 14.4 8 12.6L9.5 13.4" fill="none" stroke="#111" stroke-width="1.1"/></svg>
<span class="t" style="left:236.70px;top:199.69px;font-size:11px;line-height:11px;color:#000;letter-spacing:-0.075px;transform:scale(1.000,1.125);transform-origin:0 9.31px;">Плиты перкрытия ПК 64-15-8АтVт</span>
<span class="t" style="left:516.50px;top:199.69px;font-size:11px;line-height:11px;color:#000;letter-spacing:-0.300px;transform:scale(0.879,1.125);transform-origin:0 9.31px;">ШТ</span>
<span class="t" style="left:624.00px;top:199.69px;font-size:11px;line-height:11px;color:#000;letter-spacing:-0.228px;transform:scale(1.000,1.125);transform-origin:0 9.31px;">01.01.2005</span>
<span class="t" style="left:724.00px;top:199.69px;font-size:11px;line-height:11px;color:#000;letter-spacing:-0.228px;transform:scale(1.000,1.125);transform-origin:0 9.31px;">31.12.2007</span>
<span class="t" style="left:847.50px;top:199.69px;font-size:11px;line-height:11px;color:#000;transform:scale(1.000,1.125);transform-origin:0 9.31px;">1</span>
<div style="left:127px;top:215px;width:868px;height:18px;background:#fff;"></div>
<div style="left:127px;top:233px;width:868px;height:1px;background:#c0bdae;"></div>
<div style="left:213px;top:215px;width:1px;height:18px;background:#c0bdae;"></div>
<div style="left:513px;top:215px;width:1px;height:18px;background:#c0bdae;"></div>
<div style="left:600px;top:215px;width:1px;height:18px;background:#c0bdae;"></div>
<div style="left:700px;top:215px;width:1px;height:18px;background:#c0bdae;"></div>
<div style="left:800px;top:215px;width:1px;height:18px;background:#c0bdae;"></div>
<div style="left:900px;top:215px;width:1px;height:18px;background:#c0bdae;"></div>
<span class="t" style="left:130.00px;top:218.69px;font-size:11px;line-height:11px;color:#000;transform:scale(1.000,1.125);transform-origin:0 9.31px;">2</span>
<svg style="left:216px;top:217px" width="15" height="15" viewBox="0 0 15 15"><path d="M7 1L11.5 0.8L11.8 7.5L14 9.5L13.5 12L9 13L6 10Z" fill="#707070"/>
<path d="M9 2.5L10.2 0.5M6 2L5 0.6M11 4L11 9" stroke="#222" stroke-width="1"/>
<path d="M1 4.5C1 3 8 3 8 4.5L8 12.5C8 14.2 1 14.2 1 12.5Z" fill="#e0e0e0"/>
<path d="M3 4.5L3 13.5M5 4.5L5 13.6" stroke="#fff" stroke-width="1.6"/>
<path d="M1 4.5C1 3 8 3 8 4.5" fill="#f4f4f4" stroke="#b0b0b0" stroke-width="0.8"/>
<path d="M1.2 12.6C1.5 14.4 7.5 14.4 8 12.6L9.5 13.4" fill="none" stroke="#111" stroke-width="1.1"/></svg>
<span class="t" style="left:236.70px;top:218.69px;font-size:11px;line-height:11px;color:#000;letter-spacing:-0.116px;transform:scale(1.000,1.125);transform-origin:0 9.31px;">Перемычки 9-ПБ-26-8п</span>
<span class="t" style="left:516.50px;top:218.69px;font-size:11px;line-height:11px;color:#000;letter-spacing:-0.300px;transform:scale(0.879,1.125);transform-origin:0 9.31px;">ШТ</span>
<span class="t" style="left:624.00px;top:218.69px;font-size:11px;line-height:11px;color:#000;letter-spacing:-0.228px;transform:scale(1.000,1.125);transform-origin:0 9.31px;">01.01.2005</span>
<span class="t" style="left:724.00px;top:218.69px;font-size:11px;line-height:11px;color:#000;letter-spacing:-0.228px;transform:scale(1.000,1.125);transform-origin:0 9.31px;">31.12.2007</span>
<span class="t" style="left:847.50px;top:218.69px;font-size:11px;line-height:11px;color:#000;transform:scale(1.000,1.125);transform-origin:0 9.31px;">1</span>
<div style="left:127px;top:234px;width:868px;height:18px;background:#fff;"></div>
<div style="left:127px;top:252px;width:868px;height:1px;background:#c0bdae;"></div>
<div style="left:213px;top:234px;width:1px;height:18px;background:#c0bdae;"></div>
<div style="left:513px;top:234px;width:1px;height:18px;background:#c0bdae;"></div>
<div style="left:600px;top:234px;width:1px;height:18px;background:#c0bdae;"></div>
<div style="left:700px;top:234px;width:1px;height:18px;background:#c0bdae;"></div>
<div style="left:800px;top:234px;width:1px;height:18px;background:#c0bdae;"></div>
<div style="left:900px;top:234px;width:1px;height:18px;background:#c0bdae;"></div>
<span class="t" style="left:130.00px;top:237.69px;font-size:11px;line-height:11px;color:#000;transform:scale(1.000,1.125);transform-origin:0 9.31px;">3</span>
<svg style="left:216px;top:236px" width="15" height="15" viewBox="0 0 15 15"><path d="M7 1L11.5 0.8L11.8 7.5L14 9.5L13.5 12L9 13L6 10Z" fill="#707070"/>
<path d="M9 2.5L10.2 0.5M6 2L5 0.6M11 4L11 9" stroke="#222" stroke-width="1"/>
<path d="M1 4.5C1 3 8 3 8 4.5L8 12.5C8 14.2 1 14.2 1 12.5Z" fill="#e0e0e0"/>
<path d="M3 4.5L3 13.5M5 4.5L5 13.6" stroke="#fff" stroke-width="1.6"/>
<path d="M1 4.5C1 3 8 3 8 4.5" fill="#f4f4f4" stroke="#b0b0b0" stroke-width="0.8"/>
<path d="M1.2 12.6C1.5 14.4 7.5 14.4 8 12.6L9.5 13.4" fill="none" stroke="#111" stroke-width="1.1"/></svg>
<span class="t" style="left:236.70px;top:237.69px;font-size:11px;line-height:11px;color:#000;letter-spacing:-0.033px;transform:scale(1.000,1.125);transform-origin:0 9.31px;">Плиты перкрытия ПК 72.15.8АтVт</span>
<span class="t" style="left:516.50px;top:237.69px;font-size:11px;line-height:11px;color:#000;letter-spacing:-0.300px;transform:scale(0.879,1.125);transform-origin:0 9.31px;">ШТ</span>
<span class="t" style="left:624.00px;top:237.69px;font-size:11px;line-height:11px;color:#000;letter-spacing:-0.228px;transform:scale(1.000,1.125);transform-origin:0 9.31px;">01.01.2003</span>
<span class="t" style="left:724.00px;top:237.69px;font-size:11px;line-height:11px;color:#000;letter-spacing:-0.228px;transform:scale(1.000,1.125);transform-origin:0 9.31px;">31.12.2003</span>
<span class="t" style="left:847.50px;top:237.69px;font-size:11px;line-height:11px;color:#000;transform:scale(1.000,1.125);transform-origin:0 9.31px;">1</span>
<div style="left:127px;top:253px;width:868px;height:18px;background:#fff;"></div>
<div style="left:127px;top:271px;width:868px;height:1px;background:#c0bdae;"></div>
<div style="left:213px;top:253px;width:1px;height:18px;background:#c0bdae;"></div>
<div style="left:513px;top:253px;width:1px;height:18px;background:#c0bdae;"></div>
<div style="left:600px;top:253px;width:1px;height:18px;background:#c0bdae;"></div>
<div style="left:700px;top:253px;width:1px;height:18px;background:#c0bdae;"></div>
<div style="left:800px;top:253px;width:1px;height:18px;background:#c0bdae;"></div>
<div style="left:900px;top:253px;width:1px;height:18px;background:#c0bdae;"></div>
<span class="t" style="left:130.00px;top:256.69px;font-size:11px;line-height:11px;color:#000;transform:scale(1.000,1.125);transform-origin:0 9.31px;">4</span>
<div style="left:127px;top:272px;width:868px;height:18px;background:#fff;"></div>
<div style="left:127px;top:290px;width:868px;height:1px;background:#c0bdae;"></div>
<div style="left:213px;top:272px;width:1px;height:18px;background:#c0bdae;"></div>
<div style="left:513px;top:272px;width:1px;height:18px;background:#c0bdae;"></div>
<div style="left:600px;top:272px;width:1px;height:18px;background:#c0bdae;"></div>
<div style="left:700px;top:272px;width:1px;height:18px;background:#c0bdae;"></div>
<div style="left:800px;top:272px;width:1px;height:18px;background:#c0bdae;"></div>
<div style="left:900px;top:272px;width:1px;height:18px;background:#c0bdae;"></div>
<span class="t" style="left:130.00px;top:275.69px;font-size:11px;line-height:11px;color:#000;transform:scale(1.000,1.125);transform-origin:0 9.31px;">5</span>
<div style="left:127px;top:291px;width:868px;height:18px;background:#fff;"></div>
<div style="left:127px;top:309px;width:868px;height:1px;background:#c0bdae;"></div>
<div style="left:213px;top:291px;width:1px;height:18px;background:#c0bdae;"></div>
<div style="left:513px;top:291px;width:1px;height:18px;background:#c0bdae;"></div>
<div style="left:600px;top:291px;width:1px;height:18px;background:#c0bdae;"></div>
<div style="left:700px;top:291px;width:1px;height:18px;background:#c0bdae;"></div>
<div style="left:800px;top:291px;width:1px;height:18px;background:#c0bdae;"></div>
<div style="left:900px;top:291px;width:1px;height:18px;background:#c0bdae;"></div>
<span class="t" style="left:130.00px;top:294.69px;font-size:11px;line-height:11px;color:#000;transform:scale(1.000,1.125);transform-origin:0 9.31px;">6</span>
<div style="left:127px;top:310px;width:868px;height:18px;background:#fff;"></div>
<div style="left:127px;top:328px;width:868px;height:1px;background:#c0bdae;"></div>
<div style="left:213px;top:310px;width:1px;height:18px;background:#c0bdae;"></div>
<div style="left:513px;top:310px;width:1px;height:18px;background:#c0bdae;"></div>
<div style="left:600px;top:310px;width:1px;height:18px;background:#c0bdae;"></div>
<div style="left:700px;top:310px;width:1px;height:18px;background:#c0bdae;"></div>
<div style="left:800px;top:310px;width:1px;height:18px;background:#c0bdae;"></div>
<div style="left:900px;top:310px;width:1px;height:18px;background:#c0bdae;"></div>
<span class="t" style="left:130.00px;top:313.69px;font-size:11px;line-height:11px;color:#000;transform:scale(1.000,1.125);transform-origin:0 9.31px;">7</span>
<div style="left:127px;top:329px;width:868px;height:327px;background:#808080;"></div>
<div class="dith" style="left:127px;top:656px;width:868px;height:17px"></div>
<div style="left:127px;top:656px;width:17px;height:17px;background:#ECE9D8;"></div>
<div style="left:127px;top:656px;width:16px;height:1px;background:#fff;"></div>
<div style="left:127px;top:656px;width:1px;height:16px;background:#fff;"></div>
<div style="left:127px;top:672px;width:17px;height:1px;background:#716F64;"></div>
<div style="left:143px;top:656px;width:1px;height:17px;background:#716F64;"></div>
<div style="left:128px;top:671px;width:15px;height:1px;background:#ACA899;"></div>
<div style="left:142px;top:657px;width:1px;height:15px;background:#ACA899;"></div>
<div style="left:144px;top:656px;width:456px;height:17px;background:#ECE9D8;"></div>
<div style="left:144px;top:656px;width:455px;height:1px;background:#fff;"></div>
<div style="left:144px;top:656px;width:1px;height:16px;background:#fff;"></div>
<div style="left:144px;top:672px;width:456px;height:1px;background:#716F64;"></div>
<div style="left:599px;top:656px;width:1px;height:17px;background:#716F64;"></div>
<div style="left:145px;top:671px;width:454px;height:1px;background:#ACA899;"></div>
<div style="left:598px;top:657px;width:1px;height:15px;background:#ACA899;"></div>
<svg style="left:132px;top:660px" width="5" height="9" viewBox="0 0 5 9"><path d="M4.5 0L4.5 8L0.3 4Z" fill="#000"/></svg>
<div style="left:10px;top:679px;width:987px;height:19px;background:#ECE9D8;box-sizing:border-box;border:1px solid;border-color:#ACA899 #fff #fff #ACA899"></div>
<div style="left:203px;top:243px;width:800px;height:456px;background:#0a1eb0;border-radius:7px 8px 0 0"></div>
<div style="left:203px;top:243px;width:800px;height:30px;background:linear-gradient(#0a50e6 0,#2470f2 7%,#1262ee 16%,#0a54e8 35%,#084ae2 70%,#0a52ea 88%,#0640d0 100%);border-radius:7px 8px 0 0"></div>
<div style="left:1000px;top:250px;width:3px;height:24px;background:linear-gradient(90deg,#0838d0,#0a1eb0 60%);"></div>
<div style="left:203px;top:272px;width:797px;height:425px;background:#0a50ee;"></div>
<div style="left:203px;top:272px;width:1px;height:427px;background:#0831d9;"></div>
<div style="left:206px;top:273px;width:792px;height:422px;background:#ECE9D8;"></div>
<span class="t" style="left:210.50px;top:253.15px;font-size:14px;line-height:14px;color:#fff;letter-spacing:-0.300px;font-weight:bold;-webkit-text-stroke:0;text-shadow:1px 1px 0 #0a2a9a;transform:scale(0.958,1);transform-origin:0 11.85px;">Редактирование рецепта</span>
<div style="left:203px;top:699px;width:800px;height:1.5px;background:#8292e4;"></div>
<div style="left:203px;top:700.5px;width:800px;height:1.5px;background:#4e56c4;"></div>
<span class="t" style="left:214.50px;top:282.69px;font-size:11px;line-height:11px;color:#000;letter-spacing:0.118px;transform:scale(1.000,1.125);transform-origin:0 9.31px;">Продукт</span>
<div style="left:262px;top:277px;width:299px;height:21px;background:#fff;"></div>
<div style="left:262px;top:277px;width:299px;height:1px;background:#ACA899;"></div>
<div style="left:262px;top:277px;width:1px;height:21px;background:#ACA899;"></div>
<div style="left:263px;top:278px;width:297px;height:1px;background:#716F64;"></div>
<div style="left:263px;top:278px;width:1px;height:19px;background:#716F64;"></div>
<div style="left:262px;top:297px;width:299px;height:1px;background:#fff;"></div>
<div style="left:560px;top:277px;width:1px;height:21px;background:#fff;"></div>
<div style="left:263px;top:296px;width:297px;height:1px;background:#ECE9D8;"></div>
<div style="left:559px;top:278px;width:1px;height:19px;background:#ECE9D8;"></div>
<span class="t" style="left:265.50px;top:281.69px;font-size:11px;line-height:11px;color:#aca899;letter-spacing:-0.068px;transform:scale(1.000,1.125);transform-origin:0 9.31px;">Плиты перкрытия ПК 64-15-8АтVт</span>
<div style="left:541px;top:279px;width:18px;height:17px;background:#ECE9D8;"></div>
<div style="left:541px;top:279px;width:17px;height:1px;background:#fff;"></div>
<div style="left:541px;top:279px;width:1px;height:16px;background:#fff;"></div>
<div style="left:541px;top:295px;width:18px;height:1px;background:#716F64;"></div>
<div style="left:558px;top:279px;width:1px;height:17px;background:#716F64;"></div>
<span class="t" style="left:546.00px;top:281.69px;font-size:11px;line-height:11px;color:#aca899;transform:scale(1.000,1.125);transform-origin:0 9.31px;">...</span>
<span class="t" style="left:214.50px;top:307.69px;font-size:11px;line-height:11px;color:#000;letter-spacing:-0.008px;transform:scale(1.000,1.125);transform-origin:0 9.31px;">Приоритетность норм</span>
<div style="left:346px;top:302px;width:41px;height:21px;background:#fff;"></div>
<div style="left:346px;top:302px;width:41px;height:1px;background:#ACA899;"></div>
<div style="left:346px;top:302px;width:1px;height:21px;background:#ACA899;"></div>
<div style="left:347px;top:303px;width:39px;height:1px;background:#716F64;"></div>
<div style="left:347px;top:303px;width:1px;height:19px;background:#716F64;"></div>
<div style="left:346px;top:322px;width:41px;height:1px;background:#fff;"></div>
<div style="left:386px;top:302px;width:1px;height:21px;background:#fff;"></div>
<div style="left:347px;top:321px;width:39px;height:1px;background:#ECE9D8;"></div>
<div style="left:385px;top:303px;width:1px;height:19px;background:#ECE9D8;"></div>
<span class="t" style="left:363.44px;top:306.69px;font-size:11px;line-height:11px;color:#aca899;transform:scale(1.000,1.125);transform-origin:0 9.31px;">1</span>
<div style="left:387px;top:302px;width:17px;height:10px;background:#ECE9D8;"></div>
<div style="left:387px;top:302px;width:16px;height:1px;background:#fff;"></div>
<div style="left:387px;top:302px;width:1px;height:9px;background:#fff;"></div>
<div style="left:387px;top:311px;width:17px;height:1px;background:#716F64;"></div>
<div style="left:403px;top:302px;width:1px;height:10px;background:#716F64;"></div>
<div style="left:387px;top:313px;width:17px;height:10px;background:#ECE9D8;"></div>
<div style="left:387px;top:313px;width:16px;height:1px;background:#fff;"></div>
<div style="left:387px;top:313px;width:1px;height:9px;background:#fff;"></div>
<div style="left:387px;top:322px;width:17px;height:1px;background:#716F64;"></div>
<div style="left:403px;top:313px;width:1px;height:10px;background:#716F64;"></div>
<svg style="left:393px;top:305px" width="5" height="3" viewBox="0 0 5 3"><path d="M0 3L2.5 0L5 3Z" fill="#aca899"/></svg>
<svg style="left:393px;top:317px" width="5" height="3" viewBox="0 0 5 3"><path d="M0 0L5 0L2.5 3Z" fill="#aca899"/></svg>
<span class="t" style="left:430.50px;top:306.69px;font-size:11px;line-height:11px;color:#000;letter-spacing:-0.025px;transform:scale(1.000,1.125);transform-origin:0 9.31px;">Ед. изм.</span>
<div style="left:478px;top:302px;width:81px;height:21px;background:#fff;"></div>
<div style="left:478px;top:302px;width:81px;height:1px;background:#ACA899;"></div>
<div style="left:478px;top:302px;width:1px;height:21px;background:#ACA899;"></div>
<div style="left:479px;top:303px;width:79px;height:1px;background:#716F64;"></div>
<div style="left:479px;top:303px;width:1px;height:19px;background:#716F64;"></div>
<div style="left:478px;top:322px;width:81px;height:1px;background:#fff;"></div>
<div style="left:558px;top:302px;width:1px;height:21px;background:#fff;"></div>
<div style="left:479px;top:321px;width:79px;height:1px;background:#ECE9D8;"></div>
<div style="left:557px;top:303px;width:1px;height:19px;background:#ECE9D8;"></div>
<span class="t" style="left:482.00px;top:306.69px;font-size:11px;line-height:11px;color:#aca899;letter-spacing:-0.300px;transform:scale(0.848,1.125);transform-origin:0 9.31px;">ШТ</span>
<span class="t" style="left:214.50px;top:332.69px;font-size:11px;line-height:11px;color:#000;letter-spacing:0.110px;transform:scale(1.000,1.125);transform-origin:0 9.31px;">Действителен с</span>
<div style="left:302px;top:327px;width:105px;height:21px;background:#fff;"></div>
<div style="left:302px;top:327px;width:105px;height:1px;background:#ACA899;"></div>
<div style="left:302px;top:327px;width:1px;height:21px;background:#ACA899;"></div>
<div style="left:303px;top:328px;width:103px;height:1px;background:#716F64;"></div>
<div style="left:303px;top:328px;width:1px;height:19px;background:#716F64;"></div>
<div style="left:302px;top:347px;width:105px;height:1px;background:#fff;"></div>
<div style="left:406px;top:327px;width:1px;height:21px;background:#fff;"></div>
<div style="left:303px;top:346px;width:103px;height:1px;background:#ECE9D8;"></div>
<div style="left:405px;top:328px;width:1px;height:19px;background:#ECE9D8;"></div>
<span class="t" style="left:328.00px;top:331.69px;font-size:11px;line-height:11px;color:#aca899;letter-spacing:-0.228px;transform:scale(1.000,1.125);transform-origin:0 9.31px;">01.01.2005</span>
<span class="t" style="left:410.50px;top:332.69px;font-size:11px;line-height:11px;color:#000;letter-spacing:-0.300px;transform:scale(0.977,1.125);transform-origin:0 9.31px;">по</span>
<div style="left:426px;top:327px;width:105px;height:21px;background:#fff;"></div>
<div style="left:426px;top:327px;width:105px;height:1px;background:#ACA899;"></div>
<div style="left:426px;top:327px;width:1px;height:21px;background:#ACA899;"></div>
<div style="left:427px;top:328px;width:103px;height:1px;background:#716F64;"></div>
<div style="left:427px;top:328px;width:1px;height:19px;background:#716F64;"></div>
<div style="left:426px;top:347px;width:105px;height:1px;background:#fff;"></div>
<div style="left:530px;top:327px;width:1px;height:21px;background:#fff;"></div>
<div style="left:427px;top:346px;width:103px;height:1px;background:#ECE9D8;"></div>
<div style="left:529px;top:328px;width:1px;height:19px;background:#ECE9D8;"></div>
<span class="t" style="left:452.00px;top:331.69px;font-size:11px;line-height:11px;color:#aca899;letter-spacing:-0.228px;transform:scale(1.000,1.125);transform-origin:0 9.31px;">31.12.2007</span>
<span class="t" style="left:214.50px;top:357.69px;font-size:11px;line-height:11px;color:#000;letter-spacing:-0.192px;transform:scale(1.000,1.125);transform-origin:0 9.31px;">Статья</span>
<div style="left:262px;top:352px;width:300px;height:21px;background:#fff;"></div>
<div style="left:262px;top:352px;width:300px;height:1px;background:#ACA899;"></div>
<div style="left:262px;top:352px;width:1px;height:21px;background:#ACA899;"></div>
<div style="left:263px;top:353px;width:298px;height:1px;background:#716F64;"></div>
<div style="left:263px;top:353px;width:1px;height:19px;background:#716F64;"></div>
<div style="left:262px;top:372px;width:300px;height:1px;background:#fff;"></div>
<div style="left:561px;top:352px;width:1px;height:21px;background:#fff;"></div>
<div style="left:263px;top:371px;width:298px;height:1px;background:#ECE9D8;"></div>
<div style="left:560px;top:353px;width:1px;height:19px;background:#ECE9D8;"></div>
<span class="t" style="left:266.50px;top:356.69px;font-size:11px;line-height:11px;color:#aca899;letter-spacing:-0.101px;transform:scale(1.000,1.125);transform-origin:0 9.31px;">Заработная плата основных рабочих</span>
<div style="left:543px;top:354px;width:17px;height:17px;background:#ECE9D8;"></div>
<div style="left:543px;top:354px;width:16px;height:1px;background:#fff;"></div>
<div style="left:543px;top:354px;width:1px;height:16px;background:#fff;"></div>
<div style="left:543px;top:370px;width:17px;height:1px;background:#716F64;"></div>
<div style="left:559px;top:354px;width:1px;height:17px;background:#716F64;"></div>
<div style="left:544px;top:369px;width:15px;height:1px;background:#ACA899;"></div>
<div style="left:558px;top:355px;width:1px;height:15px;background:#ACA899;"></div>
<svg style="left:548px;top:361px" width="7" height="4" viewBox="0 0 7 4"><path d="M0 0L7 0L3.5 4Z" fill="#aca899"/></svg>
<span class="t" style="left:214.50px;top:382.69px;font-size:11px;line-height:11px;color:#000;letter-spacing:-0.130px;transform:scale(1.000,1.125);transform-origin:0 9.31px;">Примечание</span>
<div style="left:282px;top:377px;width:567px;height:21px;background:#fff;"></div>
<div style="left:282px;top:377px;width:567px;height:1px;background:#ACA899;"></div>
<div style="left:282px;top:377px;width:1px;height:21px;background:#ACA899;"></div>
<div style="left:283px;top:378px;width:565px;height:1px;background:#716F64;"></div>
<div style="left:283px;top:378px;width:1px;height:19px;background:#716F64;"></div>
<div style="left:282px;top:397px;width:567px;height:1px;background:#fff;"></div>
<div style="left:848px;top:377px;width:1px;height:21px;background:#fff;"></div>
<div style="left:283px;top:396px;width:565px;height:1px;background:#ECE9D8;"></div>
<div style="left:847px;top:378px;width:1px;height:19px;background:#ECE9D8;"></div>
<div style="left:854px;top:377px;width:69px;height:21px;background:#ECE9D8;"></div>
<div style="left:854px;top:377px;width:68px;height:1px;background:#fff;"></div>
<div style="left:854px;top:377px;width:1px;height:20px;background:#fff;"></div>
<div style="left:854px;top:397px;width:69px;height:1px;background:#716F64;"></div>
<div style="left:922px;top:377px;width:1px;height:21px;background:#716F64;"></div>
<div style="left:855px;top:396px;width:67px;height:1px;background:#ACA899;"></div>
<div style="left:921px;top:378px;width:1px;height:19px;background:#ACA899;"></div>
<span class="t" style="left:865.00px;top:383.19px;font-size:11px;line-height:11px;color:#fff;letter-spacing:0.056px;transform:scale(1.000,1.125);transform-origin:0 9.31px;">Добавить</span>
<span class="t" style="left:864.00px;top:382.19px;font-size:11px;line-height:11px;color:#aca899;letter-spacing:0.056px;transform:scale(1.000,1.125);transform-origin:0 9.31px;">Добавить</span>
<div style="left:926px;top:377px;width:69px;height:21px;background:#ECE9D8;"></div>
<div style="left:926px;top:377px;width:68px;height:1px;background:#fff;"></div>
<div style="left:926px;top:377px;width:1px;height:20px;background:#fff;"></div>
<div style="left:926px;top:397px;width:69px;height:1px;background:#716F64;"></div>
<div style="left:994px;top:377px;width:1px;height:21px;background:#716F64;"></div>
<div style="left:927px;top:396px;width:67px;height:1px;background:#ACA899;"></div>
<div style="left:993px;top:378px;width:1px;height:19px;background:#ACA899;"></div>
<span class="t" style="left:941.00px;top:383.19px;font-size:11px;line-height:11px;color:#fff;letter-spacing:0.001px;transform:scale(1.000,1.125);transform-origin:0 9.31px;">Удалить</span>
<span class="t" style="left:940.00px;top:382.19px;font-size:11px;line-height:11px;color:#aca899;letter-spacing:0.001px;transform:scale(1.000,1.125);transform-origin:0 9.31px;">Удалить</span>
<div style="left:566px;top:278px;width:429px;height:94px;background:#808080;"></div>
<div style="left:566px;top:277px;width:429px;height:1px;background:#ACA899;"></div>
<div style="left:566px;top:277px;width:1px;height:95px;background:#ACA899;"></div>
<div style="left:567px;top:278px;width:427px;height:1px;background:#716F64;"></div>
<div style="left:567px;top:278px;width:1px;height:93px;background:#716F64;"></div>
<div style="left:994px;top:278px;width:1px;height:94px;background:#fff;"></div>
<div style="left:566px;top:371px;width:429px;height:1px;background:#fff;"></div>
<div style="left:567px;top:279px;width:427px;height:19px;background:#ECE9D8;"></div>
<div style="left:567px;top:279px;width:1px;height:18px;background:#fff;"></div>
<div style="left:567px;top:279px;width:93px;height:1px;background:#fff;"></div>
<div style="left:660px;top:279px;width:1px;height:19px;background:#9a9788;"></div>
<div style="left:661px;top:279px;width:1px;height:18px;background:#fff;"></div>
<div style="left:661px;top:279px;width:319px;height:1px;background:#fff;"></div>
<div style="left:980px;top:279px;width:1px;height:19px;background:#9a9788;"></div>
<div style="left:981px;top:279px;width:1px;height:18px;background:#fff;"></div>
<div style="left:981px;top:279px;width:12px;height:1px;background:#fff;"></div>
<div style="left:993px;top:279px;width:1px;height:19px;background:#9a9788;"></div>
<div style="left:567px;top:297px;width:427px;height:1px;background:#9a9788;"></div>
<span class="t" style="left:577.70px;top:283.69px;font-size:11px;line-height:11px;color:#000;letter-spacing:0.095px;transform:scale(1.000,1.125);transform-origin:0 9.31px;">Код установки</span>
<span class="t" style="left:755.00px;top:283.69px;font-size:11px;line-height:11px;color:#000;letter-spacing:0.038px;transform:scale(1.000,1.125);transform-origin:0 9.31px;">Наименование установки</span>
<div style="left:567px;top:298px;width:414px;height:18px;background:#ECE9D8;"></div>
<div style="left:567px;top:316px;width:414px;height:1px;background:#c0bdae;"></div>
<div style="left:660px;top:298px;width:1px;height:18px;background:#c0bdae;"></div>
<div style="left:980px;top:298px;width:1px;height:19px;background:#c0bdae;"></div>
<span class="t" style="left:570.50px;top:301.69px;font-size:11px;line-height:11px;color:#000;letter-spacing:-0.300px;transform:scale(0.970,1.125);transform-origin:0 9.31px;">01221</span>
<svg style="left:663px;top:300px" width="15" height="15" viewBox="0 0 15 15"><circle cx="7.5" cy="7.5" r="5.8" fill="#e8e8e8" stroke="#111" stroke-width="2.6" stroke-dasharray="3 1.2"/>
<path d="M3.5 6.5L6 4L9 4.5L11 7M4 10.5L10.5 10.5" stroke="#111" stroke-width="1.6" fill="none"/><circle cx="6.2" cy="10.8" r="1.4" fill="#fff"/><circle cx="4.5" cy="8.5" r="1.3" fill="#909090"/><circle cx="9" cy="7" r="1.2" fill="#fff"/></svg>
<span class="t" style="left:684.00px;top:301.69px;font-size:11px;line-height:11px;color:#000;letter-spacing:0.009px;transform:scale(1.000,1.125);transform-origin:0 9.31px;">Линия по производству плит пустотного настила</span>
<div style="left:211px;top:402px;width:784px;height:264px;background:#ACA899;"></div>
<div style="left:210px;top:402px;width:785px;height:1px;background:#ACA899;"></div>
<div style="left:210px;top:402px;width:1px;height:264px;background:#ACA899;"></div>
<div style="left:211px;top:403px;width:783px;height:1px;background:#716F64;"></div>
<div style="left:211px;top:403px;width:1px;height:262px;background:#716F64;"></div>
<div style="left:994px;top:402px;width:1px;height:264px;background:#fff;"></div>
<div style="left:211px;top:665px;width:784px;height:1px;background:#fff;"></div>
<div style="left:220px;top:411px;width:74px;height:18px;background:#ECE9D8;"></div>
<span class="t" style="left:222.50px;top:415.69px;font-size:11px;line-height:11px;color:#000;letter-spacing:-0.092px;transform:scale(1.000,1.125);transform-origin:0 9.31px;">Статья</span>
<svg style="left:261px;top:417px" width="8" height="7" viewBox="0 0 8 7"><path d="M4 0.5L7.5 6.5L0.5 6.5Z" fill="#f4f2e8" stroke="#c8c5b6" stroke-width="1"/></svg>
<div style="left:212px;top:437px;width:782px;height:18px;background:#ECE9D8;"></div>
<div style="left:212px;top:437px;width:1px;height:18px;background:#fff;"></div>
<div style="left:212px;top:437px;width:115px;height:1px;background:#fff;"></div>
<div style="left:327px;top:437px;width:1px;height:18px;background:#9a9788;"></div>
<div style="left:328px;top:437px;width:1px;height:18px;background:#fff;"></div>
<div style="left:328px;top:437px;width:219px;height:1px;background:#fff;"></div>
<div style="left:547px;top:437px;width:1px;height:18px;background:#9a9788;"></div>
<div style="left:548px;top:437px;width:1px;height:18px;background:#fff;"></div>
<div style="left:548px;top:437px;width:80px;height:1px;background:#fff;"></div>
<div style="left:628px;top:437px;width:1px;height:18px;background:#9a9788;"></div>
<div style="left:629px;top:437px;width:1px;height:18px;background:#fff;"></div>
<div style="left:629px;top:437px;width:65px;height:1px;background:#fff;"></div>
<div style="left:694px;top:437px;width:1px;height:18px;background:#9a9788;"></div>
<div style="left:695px;top:437px;width:1px;height:18px;background:#fff;"></div>
<div style="left:695px;top:437px;width:99px;height:1px;background:#fff;"></div>
<div style="left:794px;top:437px;width:1px;height:18px;background:#9a9788;"></div>
<div style="left:795px;top:437px;width:1px;height:18px;background:#fff;"></div>
<div style="left:795px;top:437px;width:66px;height:1px;background:#fff;"></div>
<div style="left:861px;top:437px;width:1px;height:18px;background:#9a9788;"></div>
<div style="left:862px;top:437px;width:1px;height:18px;background:#fff;"></div>
<div style="left:862px;top:437px;width:131px;height:1px;background:#fff;"></div>
<div style="left:993px;top:437px;width:1px;height:18px;background:#9a9788;"></div>
<div style="left:212px;top:455px;width:782px;height:1px;background:#9a9788;"></div>
<span class="t" style="left:234.50px;top:441.69px;font-size:11px;line-height:11px;color:#000;letter-spacing:0.006px;transform:scale(1.000,1.125);transform-origin:0 9.31px;">Порядок вып-ния</span>
<span class="t" style="left:374.50px;top:441.69px;font-size:11px;line-height:11px;color:#000;letter-spacing:0.000px;transform:scale(1.000,1.125);transform-origin:0 9.31px;">Наименование элемента</span>
<span class="t" style="left:578.50px;top:441.69px;font-size:11px;line-height:11px;color:#000;letter-spacing:-0.100px;transform:scale(1.000,1.125);transform-origin:0 9.31px;">Код</span>
<span class="t" style="left:642.00px;top:441.69px;font-size:11px;line-height:11px;color:#000;letter-spacing:-0.103px;transform:scale(1.000,1.125);transform-origin:0 9.31px;">Ед.изм.</span>
<span class="t" style="left:728.50px;top:441.69px;font-size:11px;line-height:11px;color:#000;letter-spacing:-0.089px;transform:scale(1.000,1.125);transform-origin:0 9.31px;">Норма</span>
<span class="t" style="left:807.50px;top:441.69px;font-size:11px;line-height:11px;color:#000;letter-spacing:-0.289px;transform:scale(1.000,1.125);transform-origin:0 9.31px;">Срок об.</span>
<span class="t" style="left:925.50px;top:441.69px;font-size:11px;line-height:11px;color:#000;letter-spacing:-0.054px;transform:scale(1.000,1.125);transform-origin:0 9.31px;clip-path:inset(0 11px 0 0);">Подразделение</span>
<svg style="left:506px;top:443px" width="9" height="8" viewBox="0 0 9 8"><path d="M0.5 0.5L8.5 0.5L4.5 7.5Z" fill="#f4f2e8" stroke="#b8b5a6" stroke-width="1"/></svg>
<div style="left:212px;top:456px;width:782px;height:18px;background:#ECE9D8;"></div>
<div style="left:212px;top:474px;width:782px;height:1px;background:#c0bdae;"></div>
<div style="left:214px;top:459px;width:12px;height:12px;background:#ECE9D8;box-sizing:border-box;border:1px solid;border-color:#fff #b8b5a6 #b8b5a6 #fff"></div>
<div style="left:217px;top:464px;width:6px;height:1px;background:#000;"></div>
<svg style="left:234px;top:456px" width="14" height="17" viewBox="0 0 14 17"><path d="M8.5 11L13 14.5L8 16Z" fill="#111"/>
<path d="M1 1L6.5 3.5L9 7L9 15L1 11.5Z" fill="#fff"/><path d="M1 9.5L9 13L9 15L1 11.5Z" fill="#c8c8c8"/>
<path d="M1 1L6.5 3.5" stroke="#111" stroke-width="1" stroke-dasharray="1 1"/><path d="M6.5 3.5L9 7L9 15L1 11.5" fill="none" stroke="#111" stroke-width="1.2"/>
<path d="M6.8 4.2L7 6.4L8.6 6.9Z" fill="#30b8b8"/></svg>
<span class="t" style="left:250.00px;top:459.69px;font-size:11px;line-height:11px;color:#000;letter-spacing:-0.116px;transform:scale(1.000,1.125);transform-origin:0 9.31px;">Заработная плата основных рабочих</span>
<div style="left:212px;top:475px;width:16px;height:19px;background:#ECE9D8;"></div>
<div style="left:227px;top:475px;width:1px;height:19px;background:#c0bdae;"></div>
<div style="left:228px;top:475px;width:766px;height:18px;background:#fff;"></div>
<div style="left:228px;top:493px;width:766px;height:1px;background:#c0bdae;"></div>
<div style="left:327px;top:475px;width:1px;height:18px;background:#c0bdae;"></div>
<div style="left:547px;top:475px;width:1px;height:18px;background:#c0bdae;"></div>
<div style="left:628px;top:475px;width:1px;height:18px;background:#c0bdae;"></div>
<div style="left:694px;top:475px;width:1px;height:18px;background:#c0bdae;"></div>
<div style="left:794px;top:475px;width:1px;height:18px;background:#c0bdae;"></div>
<div style="left:861px;top:475px;width:1px;height:18px;background:#c0bdae;"></div>
<span class="t" style="left:319.38px;top:478.69px;font-size:11px;line-height:11px;color:#000;transform:scale(1.000,1.125);transform-origin:0 9.31px;">0</span>
<svg style="left:331px;top:477px" width="15" height="15" viewBox="0 0 15 15"><path d="M7 1L11.5 0.8L11.8 7.5L14 9.5L13.5 12L9 13L6 10Z" fill="#707070"/>
<path d="M9 2.5L10.2 0.5M6 2L5 0.6M11 4L11 9" stroke="#222" stroke-width="1"/>
<path d="M1 4.5C1 3 8 3 8 4.5L8 12.5C8 14.2 1 14.2 1 12.5Z" fill="#e0e0e0"/>
<path d="M3 4.5L3 13.5M5 4.5L5 13.6" stroke="#fff" stroke-width="1.6"/>
<path d="M1 4.5C1 3 8 3 8 4.5" fill="#f4f4f4" stroke="#b0b0b0" stroke-width="0.8"/>
<path d="M1.2 12.6C1.5 14.4 7.5 14.4 8 12.6L9.5 13.4" fill="none" stroke="#111" stroke-width="1.1"/></svg>
<span class="t" style="left:351.00px;top:478.69px;font-size:11px;line-height:11px;color:#000;letter-spacing:-0.300px;transform:scale(0.923,1.125);transform-origin:0 9.31px;">Зарплата</span>
<span class="t" style="left:567.00px;top:478.69px;font-size:11px;line-height:11px;color:#000;letter-spacing:-0.300px;transform:scale(0.880,1.125);transform-origin:0 9.31px;">18</span>
<span class="t" style="left:630.50px;top:478.69px;font-size:11px;line-height:11px;color:#000;letter-spacing:-0.300px;transform:scale(0.942,1.125);transform-origin:0 9.31px;">РУБ</span>
<span class="t" style="left:730.00px;top:478.69px;font-size:11px;line-height:11px;color:#000;letter-spacing:-0.223px;transform:scale(1.000,1.125);transform-origin:0 9.31px;">300,0000000</span>
<span class="t" style="left:853.38px;top:478.69px;font-size:11px;line-height:11px;color:#000;transform:scale(1.000,1.125);transform-origin:0 9.31px;">0</span>
<svg style="left:864px;top:476px" width="15" height="16" viewBox="0 0 15 16"><path d="M11.5 12.5L14.5 14L11 15.8Z" fill="#808080"/>
<path d="M1.5 3.5L1.5 1L3.5 1L3.5 3.5M5.5 3.5L5.5 1L7.5 1L7.5 3.5M9.5 3.5L9.5 1L11.5 1L11.5 3.5" fill="#fff" stroke="#000" stroke-width="1"/>
<rect x="1.5" y="3.5" width="10.5" height="10.5" fill="#fff" stroke="#000" stroke-width="1"/>
<rect x="2" y="5" width="2.6" height="6" fill="#c0c0c0"/><rect x="4.6" y="5" width="4" height="10.6" fill="#00ffff"/><rect x="8.2" y="5" width="2.2" height="10.6" fill="#000080"/><path d="M4.8 5L6.6 8.2L8.4 5Z" fill="#fff"/>
<path d="M4.2 11L4.2 15.2L10.8 15.2L10.8 5" fill="none" stroke="#000" stroke-width="0.9"/></svg>
<div style="left:212px;top:494px;width:782px;height:18px;background:#ECE9D8;"></div>
<div style="left:212px;top:512px;width:782px;height:1px;background:#c0bdae;"></div>
<div style="left:214px;top:497px;width:12px;height:12px;background:#ECE9D8;box-sizing:border-box;border:1px solid;border-color:#fff #b8b5a6 #b8b5a6 #fff"></div>
<div style="left:217px;top:502px;width:6px;height:1px;background:#000;"></div>
<svg style="left:234px;top:494px" width="14" height="17" viewBox="0 0 14 17"><path d="M8.5 11L13 14.5L8 16Z" fill="#111"/>
<path d="M1 1L6.5 3.5L9 7L9 15L1 11.5Z" fill="#fff"/><path d="M1 9.5L9 13L9 15L1 11.5Z" fill="#c8c8c8"/>
<path d="M1 1L6.5 3.5" stroke="#111" stroke-width="1" stroke-dasharray="1 1"/><path d="M6.5 3.5L9 7L9 15L1 11.5" fill="none" stroke="#111" stroke-width="1.2"/>
<path d="M6.8 4.2L7 6.4L8.6 6.9Z" fill="#30b8b8"/></svg>
<span class="t" style="left:250.00px;top:497.69px;font-size:11px;line-height:11px;color:#000;letter-spacing:-0.078px;transform:scale(1.000,1.125);transform-origin:0 9.31px;">Сырье и материалы</span>
<div style="left:212px;top:513px;width:16px;height:19px;background:#ECE9D8;"></div>
<div style="left:227px;top:513px;width:1px;height:19px;background:#c0bdae;"></div>
<div style="left:228px;top:513px;width:766px;height:18px;background:#316ac5;"></div>
<div style="left:228px;top:531px;width:766px;height:1px;background:#c0bdae;"></div>
<div style="left:327px;top:513px;width:1px;height:18px;background:#c0bdae;"></div>
<div style="left:547px;top:513px;width:1px;height:18px;background:#c0bdae;"></div>
<div style="left:628px;top:513px;width:1px;height:18px;background:#c0bdae;"></div>
<div style="left:694px;top:513px;width:1px;height:18px;background:#c0bdae;"></div>
<div style="left:794px;top:513px;width:1px;height:18px;background:#c0bdae;"></div>
<div style="left:861px;top:513px;width:1px;height:18px;background:#c0bdae;"></div>
<span class="t" style="left:319.38px;top:516.69px;font-size:11px;line-height:11px;color:#fff;transform:scale(1.000,1.125);transform-origin:0 9.31px;">0</span>
<svg style="left:331px;top:515px" width="15" height="15" viewBox="0 0 15 15"><path d="M7 1L11.5 0.8L11.8 7.5L14 9.5L13.5 12L9 13L6 10Z" fill="#707070"/>
<path d="M9 2.5L10.2 0.5M6 2L5 0.6M11 4L11 9" stroke="#222" stroke-width="1"/>
<path d="M1 4.5C1 3 8 3 8 4.5L8 12.5C8 14.2 1 14.2 1 12.5Z" fill="#e0e0e0"/>
<path d="M3 4.5L3 13.5M5 4.5L5 13.6" stroke="#fff" stroke-width="1.6"/>
<path d="M1 4.5C1 3 8 3 8 4.5" fill="#f4f4f4" stroke="#b0b0b0" stroke-width="0.8"/>
<path d="M1.2 12.6C1.5 14.4 7.5 14.4 8 12.6L9.5 13.4" fill="none" stroke="#111" stroke-width="1.1"/></svg>
<span class="t" style="left:351.00px;top:516.69px;font-size:11px;line-height:11px;color:#fff;letter-spacing:-0.006px;transform:scale(1.000,1.125);transform-origin:0 9.31px;">Щебень гранитный</span>
<span class="t" style="left:567.00px;top:516.69px;font-size:11px;line-height:11px;color:#fff;letter-spacing:-0.300px;transform:scale(0.880,1.125);transform-origin:0 9.31px;">13</span>
<span class="t" style="left:630.50px;top:516.69px;font-size:11px;line-height:11px;color:#fff;letter-spacing:-0.300px;transform:scale(0.968,1.125);transform-origin:0 9.31px;">М3</span>
<span class="t" style="left:742.00px;top:516.69px;font-size:11px;line-height:11px;color:#fff;letter-spacing:-0.249px;transform:scale(1.000,1.125);transform-origin:0 9.31px;">0,3000000</span>
<span class="t" style="left:853.38px;top:516.69px;font-size:11px;line-height:11px;color:#fff;transform:scale(1.000,1.125);transform-origin:0 9.31px;">0</span>
<svg style="left:864px;top:514px" width="15" height="16" viewBox="0 0 15 16"><path d="M11.5 12.5L14.5 14L11 15.8Z" fill="#808080"/>
<path d="M1.5 3.5L1.5 1L3.5 1L3.5 3.5M5.5 3.5L5.5 1L7.5 1L7.5 3.5M9.5 3.5L9.5 1L11.5 1L11.5 3.5" fill="#fff" stroke="#000" stroke-width="1"/>
<rect x="1.5" y="3.5" width="10.5" height="10.5" fill="#fff" stroke="#000" stroke-width="1"/>
<rect x="2" y="5" width="2.6" height="6" fill="#c0c0c0"/><rect x="4.6" y="5" width="4" height="10.6" fill="#00ffff"/><rect x="8.2" y="5" width="2.2" height="10.6" fill="#000080"/><path d="M4.8 5L6.6 8.2L8.4 5Z" fill="#fff"/>
<path d="M4.2 11L4.2 15.2L10.8 15.2L10.8 5" fill="none" stroke="#000" stroke-width="0.9"/></svg>
<div style="left:212px;top:532px;width:16px;height:19px;background:#ECE9D8;"></div>
<div style="left:227px;top:532px;width:1px;height:19px;background:#c0bdae;"></div>
<div style="left:228px;top:532px;width:766px;height:18px;background:#fff;"></div>
<div style="left:228px;top:550px;width:766px;height:1px;background:#c0bdae;"></div>
<div style="left:327px;top:532px;width:1px;height:18px;background:#c0bdae;"></div>
<div style="left:547px;top:532px;width:1px;height:18px;background:#c0bdae;"></div>
<div style="left:628px;top:532px;width:1px;height:18px;background:#c0bdae;"></div>
<div style="left:694px;top:532px;width:1px;height:18px;background:#c0bdae;"></div>
<div style="left:794px;top:532px;width:1px;height:18px;background:#c0bdae;"></div>
<div style="left:861px;top:532px;width:1px;height:18px;background:#c0bdae;"></div>
<span class="t" style="left:319.38px;top:535.69px;font-size:11px;line-height:11px;color:#000;transform:scale(1.000,1.125);transform-origin:0 9.31px;">0</span>
<svg style="left:331px;top:534px" width="15" height="15" viewBox="0 0 15 15"><path d="M7 1L11.5 0.8L11.8 7.5L14 9.5L13.5 12L9 13L6 10Z" fill="#707070"/>
<path d="M9 2.5L10.2 0.5M6 2L5 0.6M11 4L11 9" stroke="#222" stroke-width="1"/>
<path d="M1 4.5C1 3 8 3 8 4.5L8 12.5C8 14.2 1 14.2 1 12.5Z" fill="#e0e0e0"/>
<path d="M3 4.5L3 13.5M5 4.5L5 13.6" stroke="#fff" stroke-width="1.6"/>
<path d="M1 4.5C1 3 8 3 8 4.5" fill="#f4f4f4" stroke="#b0b0b0" stroke-width="0.8"/>
<path d="M1.2 12.6C1.5 14.4 7.5 14.4 8 12.6L9.5 13.4" fill="none" stroke="#111" stroke-width="1.1"/></svg>
<span class="t" style="left:351.00px;top:535.69px;font-size:11px;line-height:11px;color:#000;letter-spacing:-0.162px;transform:scale(1.000,1.125);transform-origin:0 9.31px;">Цемент М-400</span>
<span class="t" style="left:567.00px;top:535.69px;font-size:11px;line-height:11px;color:#000;letter-spacing:-0.300px;transform:scale(0.880,1.125);transform-origin:0 9.31px;">15</span>
<span class="t" style="left:630.50px;top:535.69px;font-size:11px;line-height:11px;color:#000;letter-spacing:-0.300px;transform:scale(0.940,1.125);transform-origin:0 9.31px;">ТН</span>
<span class="t" style="left:742.00px;top:535.69px;font-size:11px;line-height:11px;color:#000;letter-spacing:-0.249px;transform:scale(1.000,1.125);transform-origin:0 9.31px;">0,4000000</span>
<span class="t" style="left:853.38px;top:535.69px;font-size:11px;line-height:11px;color:#000;transform:scale(1.000,1.125);transform-origin:0 9.31px;">0</span>
<svg style="left:864px;top:533px" width="15" height="16" viewBox="0 0 15 16"><path d="M11.5 12.5L14.5 14L11 15.8Z" fill="#808080"/>
<path d="M1.5 3.5L1.5 1L3.5 1L3.5 3.5M5.5 3.5L5.5 1L7.5 1L7.5 3.5M9.5 3.5L9.5 1L11.5 1L11.5 3.5" fill="#fff" stroke="#000" stroke-width="1"/>
<rect x="1.5" y="3.5" width="10.5" height="10.5" fill="#fff" stroke="#000" stroke-width="1"/>
<rect x="2" y="5" width="2.6" height="6" fill="#c0c0c0"/><rect x="4.6" y="5" width="4" height="10.6" fill="#00ffff"/><rect x="8.2" y="5" width="2.2" height="10.6" fill="#000080"/><path d="M4.8 5L6.6 8.2L8.4 5Z" fill="#fff"/>
<path d="M4.2 11L4.2 15.2L10.8 15.2L10.8 5" fill="none" stroke="#000" stroke-width="0.9"/></svg>
<div style="left:212px;top:551px;width:16px;height:19px;background:#ECE9D8;"></div>
<div style="left:227px;top:551px;width:1px;height:19px;background:#c0bdae;"></div>
<div style="left:228px;top:551px;width:766px;height:18px;background:#fff;"></div>
<div style="left:228px;top:569px;width:766px;height:1px;background:#c0bdae;"></div>
<div style="left:327px;top:551px;width:1px;height:18px;background:#c0bdae;"></div>
<div style="left:547px;top:551px;width:1px;height:18px;background:#c0bdae;"></div>
<div style="left:628px;top:551px;width:1px;height:18px;background:#c0bdae;"></div>
<div style="left:694px;top:551px;width:1px;height:18px;background:#c0bdae;"></div>
<div style="left:794px;top:551px;width:1px;height:18px;background:#c0bdae;"></div>
<div style="left:861px;top:551px;width:1px;height:18px;background:#c0bdae;"></div>
<span class="t" style="left:319.38px;top:554.69px;font-size:11px;line-height:11px;color:#000;transform:scale(1.000,1.125);transform-origin:0 9.31px;">0</span>
<svg style="left:331px;top:553px" width="15" height="15" viewBox="0 0 15 15"><path d="M7 1L11.5 0.8L11.8 7.5L14 9.5L13.5 12L9 13L6 10Z" fill="#707070"/>
<path d="M9 2.5L10.2 0.5M6 2L5 0.6M11 4L11 9" stroke="#222" stroke-width="1"/>
<path d="M1 4.5C1 3 8 3 8 4.5L8 12.5C8 14.2 1 14.2 1 12.5Z" fill="#e0e0e0"/>
<path d="M3 4.5L3 13.5M5 4.5L5 13.6" stroke="#fff" stroke-width="1.6"/>
<path d="M1 4.5C1 3 8 3 8 4.5" fill="#f4f4f4" stroke="#b0b0b0" stroke-width="0.8"/>
<path d="M1.2 12.6C1.5 14.4 7.5 14.4 8 12.6L9.5 13.4" fill="none" stroke="#111" stroke-width="1.1"/></svg>
<span class="t" style="left:351.00px;top:554.69px;font-size:11px;line-height:11px;color:#000;letter-spacing:0.106px;transform:scale(1.000,1.125);transform-origin:0 9.31px;">Песок</span>
<span class="t" style="left:567.00px;top:554.69px;font-size:11px;line-height:11px;color:#000;letter-spacing:-0.300px;transform:scale(0.880,1.125);transform-origin:0 9.31px;">14</span>
<span class="t" style="left:630.50px;top:554.69px;font-size:11px;line-height:11px;color:#000;letter-spacing:-0.300px;transform:scale(0.968,1.125);transform-origin:0 9.31px;">М3</span>
<span class="t" style="left:742.00px;top:554.69px;font-size:11px;line-height:11px;color:#000;letter-spacing:-0.249px;transform:scale(1.000,1.125);transform-origin:0 9.31px;">1,0000000</span>
<span class="t" style="left:853.38px;top:554.69px;font-size:11px;line-height:11px;color:#000;transform:scale(1.000,1.125);transform-origin:0 9.31px;">0</span>
<svg style="left:864px;top:552px" width="15" height="16" viewBox="0 0 15 16"><path d="M11.5 12.5L14.5 14L11 15.8Z" fill="#808080"/>
<path d="M1.5 3.5L1.5 1L3.5 1L3.5 3.5M5.5 3.5L5.5 1L7.5 1L7.5 3.5M9.5 3.5L9.5 1L11.5 1L11.5 3.5" fill="#fff" stroke="#000" stroke-width="1"/>
<rect x="1.5" y="3.5" width="10.5" height="10.5" fill="#fff" stroke="#000" stroke-width="1"/>
<rect x="2" y="5" width="2.6" height="6" fill="#c0c0c0"/><rect x="4.6" y="5" width="4" height="10.6" fill="#00ffff"/><rect x="8.2" y="5" width="2.2" height="10.6" fill="#000080"/><path d="M4.8 5L6.6 8.2L8.4 5Z" fill="#fff"/>
<path d="M4.2 11L4.2 15.2L10.8 15.2L10.8 5" fill="none" stroke="#000" stroke-width="0.9"/></svg>
<div style="left:212px;top:570px;width:16px;height:19px;background:#ECE9D8;"></div>
<div style="left:227px;top:570px;width:1px;height:19px;background:#c0bdae;"></div>
<div style="left:228px;top:570px;width:766px;height:18px;background:#fff;"></div>
<div style="left:228px;top:588px;width:766px;height:1px;background:#c0bdae;"></div>
<div style="left:327px;top:570px;width:1px;height:18px;background:#c0bdae;"></div>
<div style="left:547px;top:570px;width:1px;height:18px;background:#c0bdae;"></div>
<div style="left:628px;top:570px;width:1px;height:18px;background:#c0bdae;"></div>
<div style="left:694px;top:570px;width:1px;height:18px;background:#c0bdae;"></div>
<div style="left:794px;top:570px;width:1px;height:18px;background:#c0bdae;"></div>
<div style="left:861px;top:570px;width:1px;height:18px;background:#c0bdae;"></div>
<span class="t" style="left:319.38px;top:573.69px;font-size:11px;line-height:11px;color:#000;transform:scale(1.000,1.125);transform-origin:0 9.31px;">0</span>
<svg style="left:331px;top:572px" width="15" height="15" viewBox="0 0 15 15"><path d="M7 1L11.5 0.8L11.8 7.5L14 9.5L13.5 12L9 13L6 10Z" fill="#707070"/>
<path d="M9 2.5L10.2 0.5M6 2L5 0.6M11 4L11 9" stroke="#222" stroke-width="1"/>
<path d="M1 4.5C1 3 8 3 8 4.5L8 12.5C8 14.2 1 14.2 1 12.5Z" fill="#e0e0e0"/>
<path d="M3 4.5L3 13.5M5 4.5L5 13.6" stroke="#fff" stroke-width="1.6"/>
<path d="M1 4.5C1 3 8 3 8 4.5" fill="#f4f4f4" stroke="#b0b0b0" stroke-width="0.8"/>
<path d="M1.2 12.6C1.5 14.4 7.5 14.4 8 12.6L9.5 13.4" fill="none" stroke="#111" stroke-width="1.1"/></svg>
<span class="t" style="left:351.00px;top:573.69px;font-size:11px;line-height:11px;color:#000;letter-spacing:-0.372px;transform:scale(1.000,1.125);transform-origin:0 9.31px;">Метал</span>
<span class="t" style="left:567.00px;top:573.69px;font-size:11px;line-height:11px;color:#000;letter-spacing:-0.300px;transform:scale(0.880,1.125);transform-origin:0 9.31px;">20</span>
<span class="t" style="left:630.50px;top:573.69px;font-size:11px;line-height:11px;color:#000;letter-spacing:-0.300px;transform:scale(0.940,1.125);transform-origin:0 9.31px;">ТН</span>
<span class="t" style="left:742.00px;top:573.69px;font-size:11px;line-height:11px;color:#000;letter-spacing:-0.249px;transform:scale(1.000,1.125);transform-origin:0 9.31px;">0,1000000</span>
<span class="t" style="left:853.38px;top:573.69px;font-size:11px;line-height:11px;color:#000;transform:scale(1.000,1.125);transform-origin:0 9.31px;">0</span>
<svg style="left:864px;top:571px" width="15" height="16" viewBox="0 0 15 16"><path d="M11.5 12.5L14.5 14L11 15.8Z" fill="#808080"/>
<path d="M1.5 3.5L1.5 1L3.5 1L3.5 3.5M5.5 3.5L5.5 1L7.5 1L7.5 3.5M9.5 3.5L9.5 1L11.5 1L11.5 3.5" fill="#fff" stroke="#000" stroke-width="1"/>
<rect x="1.5" y="3.5" width="10.5" height="10.5" fill="#fff" stroke="#000" stroke-width="1"/>
<rect x="2" y="5" width="2.6" height="6" fill="#c0c0c0"/><rect x="4.6" y="5" width="4" height="10.6" fill="#00ffff"/><rect x="8.2" y="5" width="2.2" height="10.6" fill="#000080"/><path d="M4.8 5L6.6 8.2L8.4 5Z" fill="#fff"/>
<path d="M4.2 11L4.2 15.2L10.8 15.2L10.8 5" fill="none" stroke="#000" stroke-width="0.9"/></svg>
<div style="left:212px;top:589px;width:782px;height:18px;background:#ECE9D8;"></div>
<div style="left:212px;top:607px;width:782px;height:1px;background:#c0bdae;"></div>
<div style="left:214px;top:592px;width:12px;height:12px;background:#ECE9D8;box-sizing:border-box;border:1px solid;border-color:#fff #b8b5a6 #b8b5a6 #fff"></div>
<div style="left:217px;top:597px;width:6px;height:1px;background:#000;"></div>
<svg style="left:234px;top:589px" width="14" height="17" viewBox="0 0 14 17"><path d="M8.5 11L13 14.5L8 16Z" fill="#111"/>
<path d="M1 1L6.5 3.5L9 7L9 15L1 11.5Z" fill="#fff"/><path d="M1 9.5L9 13L9 15L1 11.5Z" fill="#c8c8c8"/>
<path d="M1 1L6.5 3.5" stroke="#111" stroke-width="1" stroke-dasharray="1 1"/><path d="M6.5 3.5L9 7L9 15L1 11.5" fill="none" stroke="#111" stroke-width="1.2"/>
<path d="M6.8 4.2L7 6.4L8.6 6.9Z" fill="#30b8b8"/></svg>
<span class="t" style="left:248.50px;top:592.69px;font-size:11px;line-height:11px;color:#000;letter-spacing:0.157px;transform:scale(1.000,1.125);transform-origin:0 9.31px;">Энергетика</span>
<div style="left:212px;top:608px;width:16px;height:19px;background:#ECE9D8;"></div>
<div style="left:227px;top:608px;width:1px;height:19px;background:#c0bdae;"></div>
<div style="left:228px;top:608px;width:766px;height:18px;background:#fff;"></div>
<div style="left:228px;top:626px;width:766px;height:1px;background:#c0bdae;"></div>
<div style="left:327px;top:608px;width:1px;height:18px;background:#c0bdae;"></div>
<div style="left:547px;top:608px;width:1px;height:18px;background:#c0bdae;"></div>
<div style="left:628px;top:608px;width:1px;height:18px;background:#c0bdae;"></div>
<div style="left:694px;top:608px;width:1px;height:18px;background:#c0bdae;"></div>
<div style="left:794px;top:608px;width:1px;height:18px;background:#c0bdae;"></div>
<div style="left:861px;top:608px;width:1px;height:18px;background:#c0bdae;"></div>
<span class="t" style="left:319.38px;top:611.69px;font-size:11px;line-height:11px;color:#000;transform:scale(1.000,1.125);transform-origin:0 9.31px;">0</span>
<svg style="left:331px;top:610px" width="15" height="15" viewBox="0 0 15 15"><path d="M7 1L11.5 0.8L11.8 7.5L14 9.5L13.5 12L9 13L6 10Z" fill="#707070"/>
<path d="M9 2.5L10.2 0.5M6 2L5 0.6M11 4L11 9" stroke="#222" stroke-width="1"/>
<path d="M1 4.5C1 3 8 3 8 4.5L8 12.5C8 14.2 1 14.2 1 12.5Z" fill="#e0e0e0"/>
<path d="M3 4.5L3 13.5M5 4.5L5 13.6" stroke="#fff" stroke-width="1.6"/>
<path d="M1 4.5C1 3 8 3 8 4.5" fill="#f4f4f4" stroke="#b0b0b0" stroke-width="0.8"/>
<path d="M1.2 12.6C1.5 14.4 7.5 14.4 8 12.6L9.5 13.4" fill="none" stroke="#111" stroke-width="1.1"/></svg>
<span class="t" style="left:351.00px;top:611.69px;font-size:11px;line-height:11px;color:#000;letter-spacing:0.014px;transform:scale(1.000,1.125);transform-origin:0 9.31px;">Электроэнергия</span>
<span class="t" style="left:567.00px;top:611.69px;font-size:11px;line-height:11px;color:#000;letter-spacing:-0.300px;transform:scale(0.880,1.125);transform-origin:0 9.31px;">17</span>
<span class="t" style="left:630.50px;top:611.69px;font-size:11px;line-height:11px;color:#000;letter-spacing:0.596px;transform:scale(1.000,1.125);transform-origin:0 9.31px;">КВТ/Ч</span>
<span class="t" style="left:742.00px;top:611.69px;font-size:11px;line-height:11px;color:#000;letter-spacing:-0.249px;transform:scale(1.000,1.125);transform-origin:0 9.31px;">4,0000000</span>
<span class="t" style="left:853.38px;top:611.69px;font-size:11px;line-height:11px;color:#000;transform:scale(1.000,1.125);transform-origin:0 9.31px;">0</span>
<svg style="left:864px;top:609px" width="15" height="16" viewBox="0 0 15 16"><path d="M11.5 12.5L14.5 14L11 15.8Z" fill="#808080"/>
<path d="M1.5 3.5L1.5 1L3.5 1L3.5 3.5M5.5 3.5L5.5 1L7.5 1L7.5 3.5M9.5 3.5L9.5 1L11.5 1L11.5 3.5" fill="#fff" stroke="#000" stroke-width="1"/>
<rect x="1.5" y="3.5" width="10.5" height="10.5" fill="#fff" stroke="#000" stroke-width="1"/>
<rect x="2" y="5" width="2.6" height="6" fill="#c0c0c0"/><rect x="4.6" y="5" width="4" height="10.6" fill="#00ffff"/><rect x="8.2" y="5" width="2.2" height="10.6" fill="#000080"/><path d="M4.8 5L6.6 8.2L8.4 5Z" fill="#fff"/>
<path d="M4.2 11L4.2 15.2L10.8 15.2L10.8 5" fill="none" stroke="#000" stroke-width="0.9"/></svg>
<div style="left:212px;top:627px;width:782px;height:20px;background:#808080;"></div>
<div class="dith" style="left:212px;top:647px;width:782px;height:18px"></div>
<div style="left:212px;top:647px;width:17px;height:18px;background:#ECE9D8;"></div>
<div style="left:212px;top:647px;width:16px;height:1px;background:#fff;"></div>
<div style="left:212px;top:647px;width:1px;height:17px;background:#fff;"></div>
<div style="left:212px;top:664px;width:17px;height:1px;background:#716F64;"></div>
<div style="left:228px;top:647px;width:1px;height:18px;background:#716F64;"></div>
<div style="left:213px;top:663px;width:15px;height:1px;background:#ACA899;"></div>
<div style="left:227px;top:648px;width:1px;height:16px;background:#ACA899;"></div>
<svg style="left:217px;top:652px" width="5" height="9" viewBox="0 0 5 9"><path d="M4.5 0L4.5 8L0.3 4Z" fill="#000"/></svg>
<div style="left:229px;top:647px;width:187px;height:18px;background:#ECE9D8;"></div>
<div style="left:229px;top:647px;width:186px;height:1px;background:#fff;"></div>
<div style="left:229px;top:647px;width:1px;height:17px;background:#fff;"></div>
<div style="left:229px;top:664px;width:187px;height:1px;background:#716F64;"></div>
<div style="left:415px;top:647px;width:1px;height:18px;background:#716F64;"></div>
<div style="left:230px;top:663px;width:185px;height:1px;background:#ACA899;"></div>
<div style="left:414px;top:648px;width:1px;height:16px;background:#ACA899;"></div>
<div style="left:976px;top:647px;width:17px;height:18px;background:#ECE9D8;"></div>
<div style="left:976px;top:647px;width:16px;height:1px;background:#fff;"></div>
<div style="left:976px;top:647px;width:1px;height:17px;background:#fff;"></div>
<div style="left:976px;top:664px;width:17px;height:1px;background:#716F64;"></div>
<div style="left:992px;top:647px;width:1px;height:18px;background:#716F64;"></div>
<div style="left:977px;top:663px;width:15px;height:1px;background:#ACA899;"></div>
<div style="left:991px;top:648px;width:1px;height:16px;background:#ACA899;"></div>
<svg style="left:983px;top:652px" width="5" height="9" viewBox="0 0 5 9"><path d="M0.5 0L0.5 8L4.7 4Z" fill="#000"/></svg>
<div style="left:210px;top:670px;width:69px;height:21px;background:#ECE9D8;"></div>
<div style="left:210px;top:670px;width:68px;height:1px;background:#fff;"></div>
<div style="left:210px;top:670px;width:1px;height:20px;background:#fff;"></div>
<div style="left:210px;top:690px;width:69px;height:1px;background:#716F64;"></div>
<div style="left:278px;top:670px;width:1px;height:21px;background:#716F64;"></div>
<div style="left:211px;top:689px;width:67px;height:1px;background:#ACA899;"></div>
<div style="left:277px;top:671px;width:1px;height:19px;background:#ACA899;"></div>
<span class="t" style="left:221.00px;top:676.19px;font-size:11px;line-height:11px;color:#fff;letter-spacing:0.056px;transform:scale(1.000,1.125);transform-origin:0 9.31px;">Добавить</span>
<span class="t" style="left:220.00px;top:675.19px;font-size:11px;line-height:11px;color:#aca899;letter-spacing:0.056px;transform:scale(1.000,1.125);transform-origin:0 9.31px;">Добавить</span>
<div style="left:283px;top:670px;width:69px;height:21px;background:#ECE9D8;"></div>
<div style="left:283px;top:670px;width:68px;height:1px;background:#fff;"></div>
<div style="left:283px;top:670px;width:1px;height:20px;background:#fff;"></div>
<div style="left:283px;top:690px;width:69px;height:1px;background:#716F64;"></div>
<div style="left:351px;top:670px;width:1px;height:21px;background:#716F64;"></div>
<div style="left:284px;top:689px;width:67px;height:1px;background:#ACA899;"></div>
<div style="left:350px;top:671px;width:1px;height:19px;background:#ACA899;"></div>
<span class="t" style="left:297.00px;top:676.19px;font-size:11px;line-height:11px;color:#fff;letter-spacing:0.168px;transform:scale(1.000,1.125);transform-origin:0 9.31px;">Удалить</span>
<span class="t" style="left:296.00px;top:675.19px;font-size:11px;line-height:11px;color:#aca899;letter-spacing:0.168px;transform:scale(1.000,1.125);transform-origin:0 9.31px;">Удалить</span>
<div style="left:364px;top:670px;width:85px;height:21px;background:#ECE9D8;"></div>
<div style="left:364px;top:670px;width:84px;height:1px;background:#fff;"></div>
<div style="left:364px;top:670px;width:1px;height:20px;background:#fff;"></div>
<div style="left:364px;top:690px;width:85px;height:1px;background:#716F64;"></div>
<div style="left:448px;top:670px;width:1px;height:21px;background:#716F64;"></div>
<div style="left:365px;top:689px;width:83px;height:1px;background:#ACA899;"></div>
<div style="left:447px;top:671px;width:1px;height:19px;background:#ACA899;"></div>
<span class="t" style="left:372.00px;top:676.19px;font-size:11px;line-height:11px;color:#fff;letter-spacing:-0.162px;transform:scale(1.000,1.125);transform-origin:0 9.31px;">Выбрать СПП</span>
<span class="t" style="left:371.00px;top:675.19px;font-size:11px;line-height:11px;color:#aca899;letter-spacing:-0.162px;transform:scale(1.000,1.125);transform-origin:0 9.31px;">Выбрать СПП</span>
<div style="left:453px;top:670px;width:85px;height:21px;background:#ECE9D8;"></div>
<div style="left:453px;top:670px;width:84px;height:1px;background:#fff;"></div>
<div style="left:453px;top:670px;width:1px;height:20px;background:#fff;"></div>
<div style="left:453px;top:690px;width:85px;height:1px;background:#716F64;"></div>
<div style="left:537px;top:670px;width:1px;height:21px;background:#716F64;"></div>
<div style="left:454px;top:689px;width:83px;height:1px;background:#ACA899;"></div>
<div style="left:536px;top:671px;width:1px;height:19px;background:#ACA899;"></div>
<span class="t" style="left:465.00px;top:676.19px;font-size:11px;line-height:11px;color:#fff;letter-spacing:0.042px;transform:scale(1.000,1.125);transform-origin:0 9.31px;">Убрать СПП</span>
<span class="t" style="left:464.00px;top:675.19px;font-size:11px;line-height:11px;color:#aca899;letter-spacing:0.042px;transform:scale(1.000,1.125);transform-origin:0 9.31px;">Убрать СПП</span>
<div style="left:550px;top:670px;width:109px;height:21px;background:#ECE9D8;"></div>
<div style="left:550px;top:670px;width:108px;height:1px;background:#fff;"></div>
<div style="left:550px;top:670px;width:1px;height:20px;background:#fff;"></div>
<div style="left:550px;top:690px;width:109px;height:1px;background:#716F64;"></div>
<div style="left:658px;top:670px;width:1px;height:21px;background:#716F64;"></div>
<div style="left:551px;top:689px;width:107px;height:1px;background:#ACA899;"></div>
<div style="left:657px;top:671px;width:1px;height:19px;background:#ACA899;"></div>
<span class="t" style="left:558.00px;top:676.19px;font-size:11px;line-height:11px;color:#fff;letter-spacing:-0.165px;transform:scale(1.000,1.125);transform-origin:0 9.31px;">Выбрать операцию</span>
<span class="t" style="left:557.00px;top:675.19px;font-size:11px;line-height:11px;color:#aca899;letter-spacing:-0.165px;transform:scale(1.000,1.125);transform-origin:0 9.31px;">Выбрать операцию</span>
<div style="left:663px;top:670px;width:109px;height:21px;background:#ECE9D8;"></div>
<div style="left:663px;top:670px;width:108px;height:1px;background:#fff;"></div>
<div style="left:663px;top:670px;width:1px;height:20px;background:#fff;"></div>
<div style="left:663px;top:690px;width:109px;height:1px;background:#716F64;"></div>
<div style="left:771px;top:670px;width:1px;height:21px;background:#716F64;"></div>
<div style="left:664px;top:689px;width:107px;height:1px;background:#ACA899;"></div>
<div style="left:770px;top:671px;width:1px;height:19px;background:#ACA899;"></div>
<span class="t" style="left:673.50px;top:676.19px;font-size:11px;line-height:11px;color:#fff;letter-spacing:0.001px;transform:scale(1.000,1.125);transform-origin:0 9.31px;">Убрать операцию</span>
<span class="t" style="left:672.50px;top:675.19px;font-size:11px;line-height:11px;color:#aca899;letter-spacing:0.001px;transform:scale(1.000,1.125);transform-origin:0 9.31px;">Убрать операцию</span>
<div style="left:849px;top:670px;width:69px;height:21px;background:#ECE9D8;"></div>
<div style="left:849px;top:670px;width:68px;height:1px;background:#fff;"></div>
<div style="left:849px;top:670px;width:1px;height:20px;background:#fff;"></div>
<div style="left:849px;top:690px;width:69px;height:1px;background:#716F64;"></div>
<div style="left:917px;top:670px;width:1px;height:21px;background:#716F64;"></div>
<div style="left:850px;top:689px;width:67px;height:1px;background:#ACA899;"></div>
<div style="left:916px;top:671px;width:1px;height:19px;background:#ACA899;"></div>
<span class="t" style="left:878.00px;top:676.19px;font-size:11px;line-height:11px;color:#fff;letter-spacing:-0.300px;transform:scale(0.898,1.125);transform-origin:0 9.31px;">OK</span>
<span class="t" style="left:877.00px;top:675.19px;font-size:11px;line-height:11px;color:#aca899;letter-spacing:-0.300px;transform:scale(0.898,1.125);transform-origin:0 9.31px;">OK</span>
<div style="left:922px;top:670px;width:69px;height:21px;background:#000;"></div>
<div style="left:923px;top:671px;width:67px;height:19px;background:#ECE9D8;"></div>
<div style="left:923px;top:671px;width:66px;height:1px;background:#fff;"></div>
<div style="left:923px;top:671px;width:1px;height:18px;background:#fff;"></div>
<div style="left:923px;top:689px;width:67px;height:1px;background:#716F64;"></div>
<div style="left:989px;top:671px;width:1px;height:19px;background:#716F64;"></div>
<div style="left:924px;top:688px;width:65px;height:1px;background:#ACA899;"></div>
<div style="left:988px;top:672px;width:1px;height:17px;background:#ACA899;"></div>
<span class="t" style="left:938.00px;top:675.19px;font-size:11px;line-height:11px;color:#000;letter-spacing:-0.293px;transform:scale(1.000,1.125);transform-origin:0 9.31px;">Отмена</span>
<div style="left:926px;top:674px;width:61px;height:14px;box-sizing:border-box;border:1px dotted #000"></div>
<div style="left:0px;top:708px;width:1024px;height:60px;background:linear-gradient(#3168d5 0,#4993e6 3%,#2663e0 9%,#245edc 20%,#2562df 60%,#2158d4 92%,#1941a5 100%);"></div>
<div style="left:0px;top:708.5px;width:96px;height:29.5px;background:linear-gradient(#3a8c3d 0,#5cb060 8%,#43a046 25%,#3f9c42 65%,#37903a 85%,#2c7a2f 100%);border-radius:0 12px 12px 0/0 15px 15px 0;box-shadow:inset -2px -2px 3px rgba(0,40,0,.45),1px 0 2px rgba(0,0,60,.5)"></div>
<svg style="left:10px;top:713px" width="21" height="20" viewBox="0 0 21 20"><g transform="skewX(-8)"><path d="M5 2.5C7 1 9 1 11 2.5L10 9C8 7.8 6 7.8 4 9Z" fill="#e8502a"/><path d="M12.5 3C14.5 4.2 16.5 4.2 18.5 3L17.5 9.5C15.5 10.7 13.5 10.7 11.5 9.5Z" fill="#7ac143"/>
<path d="M3.8 10.5C5.8 9.3 7.8 9.3 9.8 10.5L8.8 17C6.8 15.8 4.8 15.8 2.8 17Z" fill="#3f8be8"/><path d="M11.2 11C13.2 12.2 15.2 12.2 17.2 11L16.2 17.5C14.2 18.7 12.2 18.7 10.2 17.5Z" fill="#f9c526"/></g></svg>
<span class="t" style="left:35.00px;top:712.47px;font-size:20px;line-height:20px;color:#fff;letter-spacing:-0.300px;font-weight:bold;-webkit-text-stroke:0;font-style:italic;text-shadow:1px 1.5px 1px #1c4a1c;transform:scale(0.835,1);transform-origin:0 16.93px;">пуск</span>
<div style="left:105px;top:711px;width:160px;height:25px;background:#1e52b7;border-radius:3px;box-shadow:inset 1px 1px 2px #143a8a,inset -1px -1px 0 #2a62cc"></div>
<svg style="left:115.5px;top:715px" width="17" height="16.5" viewBox="0 0 34 33"><path d="M16 7L15.8 3.8L19.2 1.4L32.6 15L28.5 17.2L26.8 13.7Z" fill="#f0f0f0" stroke="#0a0a0a" stroke-width="2.4" stroke-linejoin="round"/>
<path d="M26 20L31.6 21.6L22.8 31.2Z" fill="#40d0d8" stroke="#0a0a0a" stroke-width="2.2" stroke-linejoin="round"/>
<path d="M9 2.6L26.8 13.7L21 30.8L1.4 18.9Z" fill="url(#fg)" stroke="#0a0a0a" stroke-width="2.6" stroke-linejoin="round"/>
<path d="M9.6 4.4L16.6 8.6" stroke="#40d0d8" stroke-width="3"/></svg>
<span class="t" style="left:135.50px;top:718.69px;font-size:11px;line-height:11px;color:#fff;letter-spacing:0.219px;">КИС:Бюджетирован...</span>
<div style="left:266px;top:712px;width:158px;height:23px;background:linear-gradient(#4c8df0 0,#3c80ee 12%,#3a7eec 80%,#336fdc 100%);border-radius:3px;box-shadow:inset 1px 1px 0 #6ba4f8,inset -1px -1px 0 #2a60c8"></div>
<svg style="left:275px;top:716px" width="16" height="16" viewBox="0 0 16 16"><path d="M4 0.5L12 0.5L15.5 4L15.5 15.5L4 15.5Z" fill="#fff" stroke="#505050" stroke-width="1"/><path d="M6 5L14 5M6 7.5L14 7.5M6 10L14 10M6 12.5L14 12.5" stroke="#a8a8a8" stroke-width="0.8"/>
<rect x="0.5" y="3.5" width="10" height="9" fill="#1c3c9c" stroke="#0a1c60" stroke-width="1"/><path d="M2 5.5L3.6 10.5L5.5 6.5L7.4 10.5L9 5.5" stroke="#fff" stroke-width="1.3" fill="none"/></svg>
<span class="t" style="left:294.50px;top:718.69px;font-size:11px;line-height:11px;color:#fff;letter-spacing:0.163px;">Разработка техноло...</span>
<div style="left:859px;top:730px;width:17px;height:16px;background:#3b69cf;"></div>
<span class="t" style="left:861.00px;top:733.19px;font-size:11px;line-height:11px;color:#fff;letter-spacing:-0.300px;transform:scale(0.834,1);transform-origin:0 9.31px;">RU</span>
<svg style="left:884px;top:729px" width="10" height="16" viewBox="0 0 10 16"><rect x="3" y="0.8" width="6" height="4" fill="none" stroke="#fff" stroke-width="1.1"/><rect x="0.8" y="3" width="5.5" height="3.2" fill="#245edc" stroke="#fff" stroke-width="1.1"/><path d="M2.5 12L7.5 12L5 15Z" fill="#fff"/></svg>
<div style="left:910px;top:708px;width:114px;height:60px;background:linear-gradient(#1a8ce8 0,#3aa8f4 3%,#1593ee 9%,#0f8bea 25%,#1290ec 70%,#0e84e0 94%,#0a63c0 100%);"></div>
<div style="left:910px;top:708px;width:1px;height:60px;background:#0a5ac0;"></div>
<div style="left:911px;top:708px;width:1px;height:60px;background:#3aa0f2;"></div>
<svg style="left:900px;top:728px" width="21" height="21" viewBox="0 0 21 21"><defs><radialGradient id="cb" cx="0.4" cy="0.35" r="0.7"><stop offset="0" stop-color="#9ad0ff"/><stop offset="0.6" stop-color="#3a8cf0"/><stop offset="1" stop-color="#1858c8"/></radialGradient></defs><circle cx="10.5" cy="10.5" r="9.3" fill="url(#cb)" stroke="#8fc0fa" stroke-width="0.8"/><path d="M12.5 6L8 10.5L12.5 15" stroke="#fff" stroke-width="2.4" fill="none"/></svg>
<svg style="left:921px;top:712px" width="17" height="16" viewBox="0 0 17 16"><rect x="2" y="0.5" width="11" height="9" fill="#f8e060" stroke="#707070" stroke-width="1"/><rect x="3.5" y="2" width="8" height="6" fill="#ffe020"/><rect x="1" y="10" width="9" height="5" fill="#e04040" stroke="#803030" stroke-width="0.6"/><path d="M1.5 12.5L9.5 12.5M5.5 10.5L5.5 14.5" stroke="#fff" stroke-width="1"/><rect x="10.5" y="8" width="5" height="7.5" fill="#9098c8" stroke="#505890" stroke-width="0.8"/></svg>
<svg style="left:921px;top:730px" width="17" height="16" viewBox="0 0 17 16"><rect x="1" y="0.5" width="9" height="14" fill="#e8e8e8" stroke="#606060" stroke-width="1"/><path d="M2.5 3L8.5 3M2.5 5.5L8.5 5.5M2.5 8L8.5 8" stroke="#606060" stroke-width="1.2"/><circle cx="11" cy="10.5" r="4.6" fill="#fff" stroke="#208020" stroke-width="1.2"/><path d="M9.4 7.8L13.6 10.5L9.4 13.2Z" fill="#20a020"/></svg>
<svg style="left:921px;top:749px" width="17" height="15" viewBox="0 0 17 15"><ellipse cx="4.5" cy="4.5" rx="3.2" ry="4" fill="#fff" stroke="#111" stroke-width="1"/><ellipse cx="11.5" cy="4.5" rx="3.2" ry="4" fill="#fff" stroke="#111" stroke-width="1"/><ellipse cx="5.6" cy="5.4" rx="1.5" ry="2" fill="#111"/><ellipse cx="10.6" cy="5.4" rx="1.5" ry="2" fill="#111"/><path d="M2.5 10.5C5 14.5 11 14.5 13.5 10.5" stroke="#111" stroke-width="1.4" fill="none"/></svg>
<span class="t" style="left:963.00px;top:713.19px;font-size:11px;line-height:11px;color:#fff;letter-spacing:0.073px;">11:02</span>
<span class="t" style="left:957.00px;top:732.69px;font-size:11px;line-height:11px;color:#fff;letter-spacing:-0.105px;">суббота</span>
<span class="t" style="left:948.50px;top:751.69px;font-size:11px;line-height:11px;color:#fff;letter-spacing:0.050px;">28.05.2005</span>
</div></body></html>
